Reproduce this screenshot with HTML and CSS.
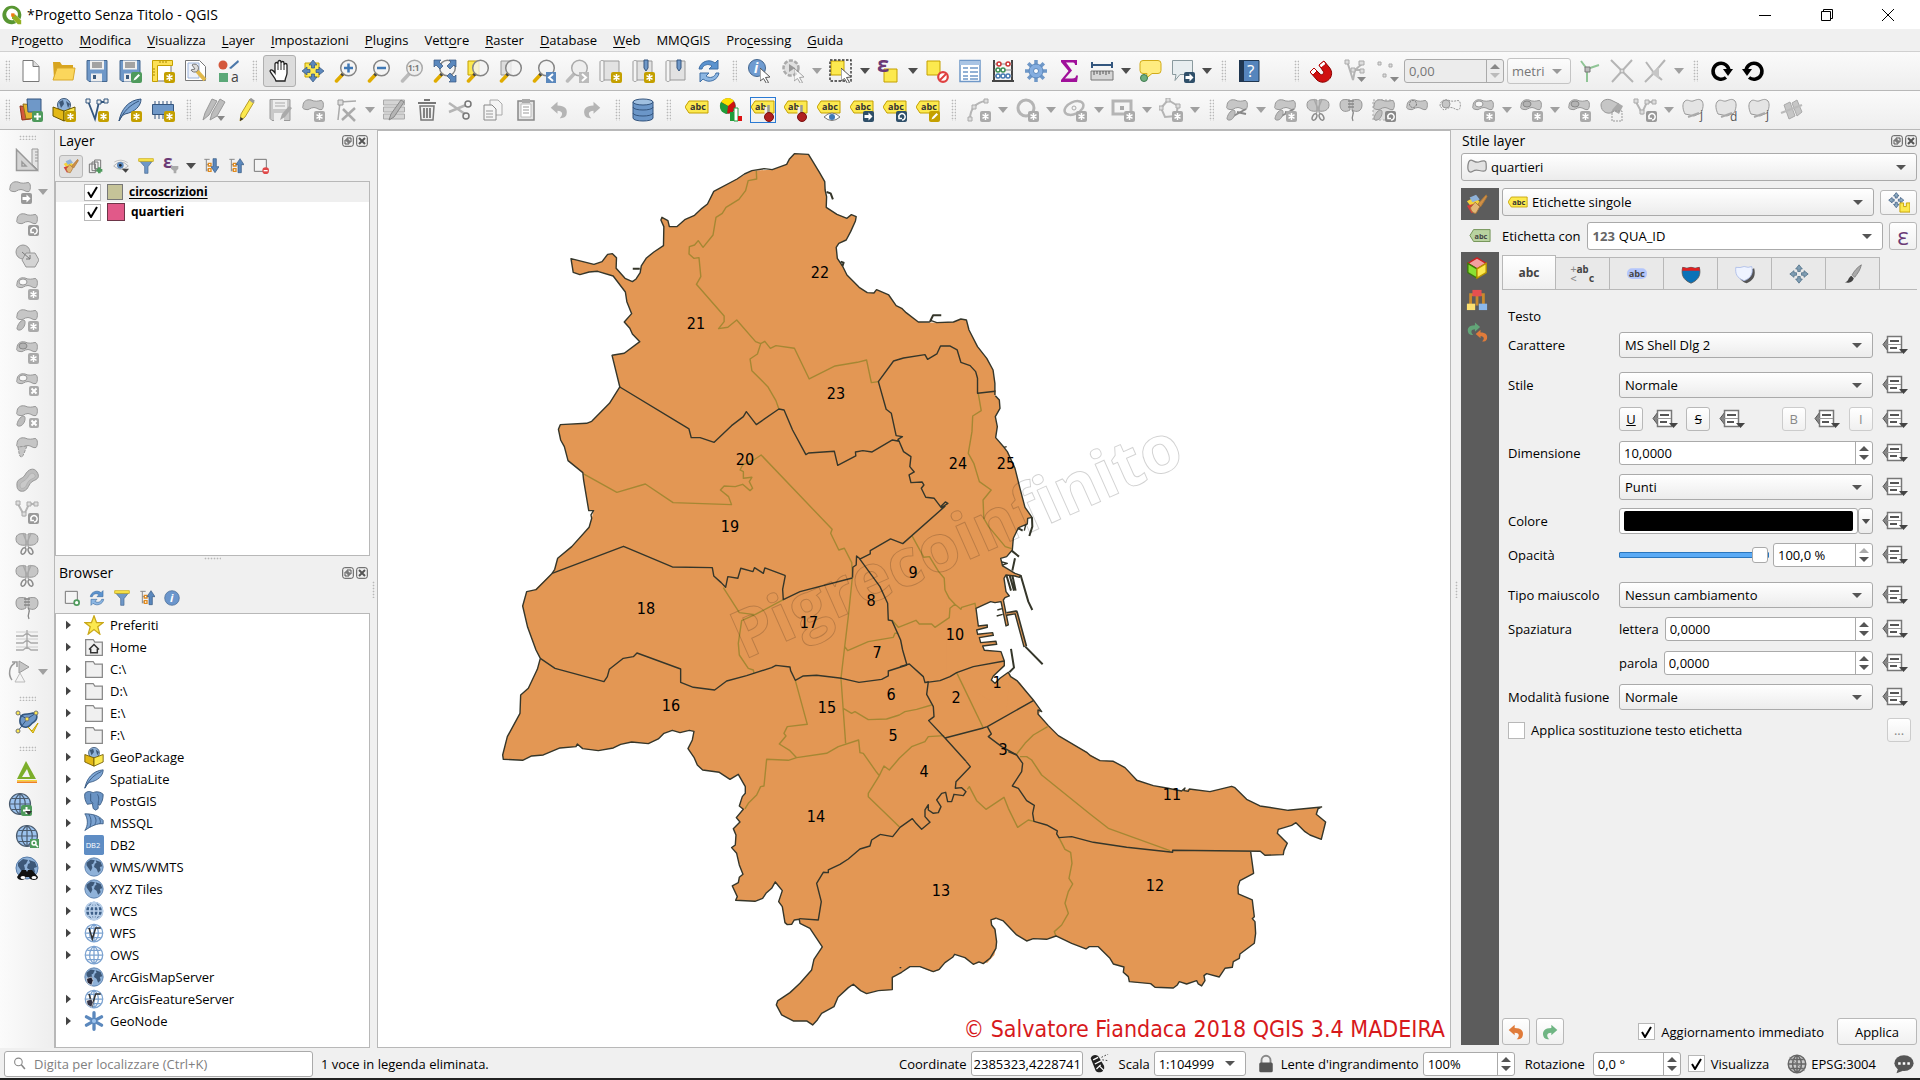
FILE: index.html
```html
<!DOCTYPE html>
<html lang="it">
<head>
<meta charset="utf-8">
<title>*Progetto Senza Titolo - QGIS</title>
<link rel="stylesheet" href="styles.css">
</head>
<body>
<svg class="defs" aria-hidden="true">
<defs>
  <!-- corner badges -->
  <symbol id="b-star" viewBox="0 0 24 24"><rect x="13" y="13" width="11" height="11" rx="2"/><path d="M18.500 15v7M15.500 16.700l6 3.600M15.500 20.300l6-3.600" stroke="#fff" stroke-width="1.500"/></symbol>
  <symbol id="b-plus" viewBox="0 0 24 24"><rect x="13" y="13" width="11" height="11" rx="2"/><path d="M18.500 15v7M15 18.500h7" stroke="#fff" stroke-width="2"/></symbol>
  <symbol id="b-x" viewBox="0 0 24 24"><rect x="14" y="14" width="10" height="10" rx="2"/><path d="M16.500 16.500l5 5M21.500 16.500l-5 5" stroke="#fff" stroke-width="2"/></symbol>
  <symbol id="b-arrow" viewBox="0 0 24 24"><rect x="13" y="13" width="11" height="11" rx="2"/><path d="M14.500 17h4v-2.500l4 4-4 4V20h-4z" fill="#fff"/></symbol>
  <symbol id="b-rot" viewBox="0 0 24 24"><rect x="13" y="13" width="11" height="11" rx="2"/><path d="M16 20a3.200 3.200 0 1 1 3 2M16 17v3.500h3" fill="none" stroke="#fff" stroke-width="1.500"/></symbol>
  <symbol id="b-pen" viewBox="0 0 24 24"><rect x="13" y="13" width="11" height="11" rx="2"/><path d="M15.500 21.500l1-2.500 4-4 1.500 1.500-4 4z" fill="#fff"/></symbol>
  <symbol id="b-left" viewBox="0 0 24 24"><rect x="14" y="13" width="10" height="11"/><path d="M21 15l-4 3.500 4 3.500" fill="none" stroke="#fff" stroke-width="2"/></symbol>
  <symbol id="b-right" viewBox="0 0 24 24"><rect x="14" y="13" width="10" height="11"/><path d="M17 15l4 3.500-4 3.500" fill="none" stroke="#fff" stroke-width="2"/></symbol>
  <!-- shared shapes -->
  <symbol id="down" viewBox="0 0 10 6"><path d="M0 0h10L5 6z" fill="#4d4d4d"/></symbol>
  <symbol id="downg" viewBox="0 0 10 6"><path d="M0 0h10L5 6z" fill="#a0a0a0"/></symbol>
  <symbol id="blob" viewBox="0 0 24 24"><path d="M2 8c0-5 4-7 8-6 4 2 7 1 10 .500 3 0 3 7 1 9-3 1-5-2-8-2-4 0-5 3-8 2C2 11 1 10 2 8z" fill="#c6c6c6" stroke="#979797"/></symbol>
  <symbol id="part" viewBox="0 0 24 24"><path d="M9 12c2 1 1 6-1 8-1 2-5 3-6 1 0-3 3-9 7-9z" fill="#bdbdbd" stroke="#979797"/></symbol>
  <symbol id="lens" viewBox="0 0 24 24"><path d="M9 15l-6.500 7" stroke="#e0ac00" stroke-width="3.500" stroke-linecap="round"/><path d="M9.500 14.500l-2 2" stroke="#444" stroke-width="3"/><circle cx="14.500" cy="9" r="7.800" fill="#f4f4f4" fill-opacity=".8" stroke="#858585" stroke-width="1.500"/></symbol>
  <symbol id="lensg" viewBox="0 0 24 24"><path d="M9 15l-6.500 7" stroke="#bbb" stroke-width="3.500" stroke-linecap="round"/><circle cx="14.500" cy="9" r="7.800" fill="#eee" stroke="#aaa" stroke-width="1.500"/></symbol>
  <symbol id="tag" viewBox="0 0 24 24"><path d="M4 3h19v12H4L0 9z" fill="#fce94f" stroke="#c4a000"/><text x="5" y="12" font-size="9" font-weight="700" fill="#333">abc</text></symbol>
  <symbol id="tagmid" viewBox="0 -3 24 24"><use href="#tag" width="24" height="24"/></symbol>
  <symbol id="globe" viewBox="0 0 24 24"><circle cx="12" cy="12" r="11" fill="#8fb2d9" stroke="#567ba8"/><path d="M3 7l5-4 5 1-2 4-2 1 1 4-2 4-3-4-2-3zM14 4l6 2 2 5-3 1 1 4-3 3-2-5-3-2 1-4 2-1z" fill="#3d5878"/></symbol>
  <symbol id="grid" viewBox="0 0 24 24"><circle cx="12" cy="12" r="10.500"/><path d="M12 1.500v21M2 12h20M4 6.500h16M4 17.500h16M12 1.500c-7 5-7 16 0 21M12 1.500c7 5 7 16 0 21" fill="none"/></symbol>
  <symbol id="cursor" viewBox="0 0 24 24"><path d="M0 0l10 9-4.500.500 3 5-2 1-3-5L0 13z" fill="#fff" stroke="#555"/></symbol>
  <symbol id="disk" viewBox="0 0 24 24"><path d="M2 1.500h20v21H4l-2-2z" fill="#6f98c8" stroke="#44678f"/><path d="M5 1.500h14v9H5z" fill="#f0f0f0"/><path d="M7 4h10M7 6h10M7 8h10" stroke="#555"/><path d="M6 14.500h11v8H6z" fill="#eee"/><path d="M8 16h3v4H8z" fill="#3c5a7c"/></symbol>
  <symbol id="book" viewBox="0 0 24 24"><path d="M5 2h16v19H6" fill="#e2e2e2" stroke="#999"/><path d="M2 3c0-2 4-2 4 0v18c0 2-4 2-4 0z" fill="#f4f4f4" stroke="#999"/></symbol>
  <symbol id="refresh" viewBox="0 0 24 24"><path d="M2 10C3 3 12-1 18 4l3-3v9h-9l3-3C11 4 6 6 5 10z" fill="#5b93cf" stroke="#3f6fa5"/><path d="M22 14c-1 7-10 11-16 6l-3 3v-9h9l-3 3c4 3 9 1 10-3z" fill="#8db7e3" stroke="#3f6fa5"/></symbol>
  <symbol id="scis" viewBox="0 0 24 24"><path d="M8 1l6 15M16 1l-6 15" stroke="#a8a8a8" stroke-width="1.500"/><ellipse cx="8.500" cy="19" rx="2" ry="3.500" transform="rotate(25 8.500 19)" fill="none" stroke="#8c8c8c" stroke-width="1.500"/><ellipse cx="15.500" cy="19" rx="2" ry="3.500" transform="rotate(-25 15.500 19)" fill="none" stroke="#8c8c8c" stroke-width="1.500"/></symbol>
  <symbol id="moves" viewBox="0 0 24 24"><path d="M12 1l4 5h-2.500v3h-3V6H8zM12 23l-4-5h2.500v-3h3v3H16zM1 12l5-4v2.500h3v3H6V16zM23 12l-5 4v-2.500h-3v-3h3V8z"/></symbol>
  <!-- file -->
  <symbol id="new" viewBox="0 0 24 24"><path d="M4 1.500h10l6 6v15H4z" fill="#fff" stroke="#777"/><path d="M14 1.500v6h6" fill="#ddd" stroke="#777"/></symbol>
  <symbol id="open" viewBox="0 0 24 24"><path d="M1 3h7l2 3h11v14H2z" fill="#d8a520"/><path d="M5 9h18l-2 12H1z" fill="#fbd65c" stroke="#d9a92a"/></symbol>
  <symbol id="saveas" viewBox="0 0 24 24"><use href="#disk"/><use href="#b-pen" fill="#4e9a5c"/></symbol>
  <symbol id="layout" viewBox="0 0 24 24"><path d="M3 3h17v19H3z" fill="#fff" stroke="#777"/><path d="M1.500 1.500h20v5h-15v16h-5z" fill="#fce055" stroke="#c4a000"/><path d="M9 2v2M12 2v2M15 2v2M2 10h2M2 13h2M2 16h2" stroke="#a98700"/><use href="#b-star" fill="#c4a000"/></symbol>
  <symbol id="manager" viewBox="0 0 24 24"><path d="M1.500 1.500h14l6 6v14h-20z" fill="#fff" stroke="#777"/><path d="M4 4h11v15H4z" fill="#eef2fa" stroke="#9cb4dc"/><path d="M13 12l8 9" stroke="#e0b84a" stroke-width="4"/><path d="M8 6a4 4 0 1 1-1 5l4-1z" fill="#ddd" stroke="#777"/></symbol>
  <symbol id="styles" viewBox="0 0 24 24"><circle cx="6" cy="6" r="4.500" fill="#d4583c"/><path d="M12 9l9-8 1 2-8 7z" fill="#4c78aa"/><path d="M2 14h9v9H2z" fill="#5ba878"/><text x="14" y="23" font-size="14" fill="#444">a</text></symbol>
  <!-- navigation -->
  <symbol id="hand" viewBox="0 0 24 24"><path d="M8 22c-1-4-5-7-6-10 1-2 3-1 5 2V5c0-2 3-2 3 0V3c0-2 3-2 3 0v1c0-2 3-2 3 0v2c0-2 3-2 3 0v8c0 3-2 5-2 8z" fill="#fff" stroke="#222" stroke-width="1.300"/><path d="M10 5v6M13 4v7M16 6v5" stroke="#222"/></symbol>
  <symbol id="panto" viewBox="0 0 24 24"><path d="M4 4h14v14H4z" fill="#fce94f" stroke="#c4a000"/><use href="#moves" fill="#5b88bd" stroke="#34557e" stroke-width=".7"/></symbol>
  <symbol id="zin" viewBox="0 0 24 24"><use href="#lens"/><path d="M14.500 4.500v9M10 9h9" stroke="#3f78b5" stroke-width="2.500"/></symbol>
  <symbol id="zout" viewBox="0 0 24 24"><use href="#lens"/><path d="M10 9h9" stroke="#3f78b5" stroke-width="2.500"/></symbol>
  <symbol id="z11" viewBox="0 0 24 24"><use href="#lensg"/><text x="8" y="12" font-size="8" font-weight="700" fill="#777">1:1</text></symbol>
  <symbol id="zfull" viewBox="0 0 24 24"><use href="#lens"/><path d="M1 1h7L6 3l4 4-3 3-4-4-2 2zM23 1v7l-2-2-4 4-3-3 4-4-2-2zM23 23h-7l2-2-4-4 3-3 4 4 2-2z" fill="#5b88bd" stroke="#34557e" stroke-width=".7"/></symbol>
  <symbol id="zsel" viewBox="0 0 24 24"><path d="M2 2h11v14H2z" fill="#fce94f" stroke="#c4a000"/><use href="#lens"/></symbol>
  <symbol id="zlay" viewBox="0 0 24 24"><path d="M2 2h10v14H2z" fill="#ddd" stroke="#999"/><use href="#lens"/></symbol>
  <symbol id="zlast" viewBox="0 0 24 24"><use href="#lens"/><use href="#b-left" fill="#5b88bd"/></symbol>
  <symbol id="znext" viewBox="0 0 24 24"><use href="#lensg"/><use href="#b-right" fill="#bbb"/></symbol>
  <symbol id="mapview" viewBox="0 0 24 24"><use href="#book"/><use href="#b-star" fill="#c4a000"/></symbol>
  <symbol id="bmk" viewBox="0 0 24 24"><use href="#book"/><path d="M13 1h4v8l-2 3-2-3z" fill="#6f98c8" stroke="#34557e"/></symbol>
  <symbol id="bmknew" viewBox="0 0 24 24"><use href="#bmk"/><use href="#b-star" fill="#c4a000"/></symbol>
  <!-- attributes -->
  <symbol id="ident" viewBox="0 0 24 24"><circle cx="9" cy="9" r="8.500" fill="#6f9bd0" stroke="#44678f"/><text x="6" y="14" font-size="14" font-style="italic" font-weight="700" fill="#fff">i</text><use href="#cursor" x="12" y="9"/></symbol>
  <symbol id="action" viewBox="0 0 24 24"><circle cx="10" cy="9" r="7.500" fill="#e0e0e0" stroke="#aaa" stroke-width="2.500" stroke-dasharray="4 1.500"/><path d="M8 5l6 4-6 4z" fill="#999"/><use href="#cursor" x="13" y="9" opacity=".5"/></symbol>
  <symbol id="select" viewBox="0 0 24 24"><path d="M2 2h13v14H2z" fill="#fce94f" stroke="#c4a000"/><path d="M1 1h21v21H1z" fill="none" stroke="#333" stroke-width="1.400" stroke-dasharray="2.500 1.500"/><use href="#cursor" x="12" y="9"/></symbol>
  <symbol id="selexp" viewBox="0 0 24 24"><path d="M7 10h13v13H7z" fill="#fce94f" stroke="#c4a000"/><text x="0" y="13" font-size="22" font-weight="700" fill="#6b3a76">ε</text></symbol>
  <symbol id="desel" viewBox="0 0 24 24"><path d="M2 2h13v14H2z" fill="#fce94f" stroke="#c4a000"/><circle cx="18" cy="18" r="4.800" fill="#fff" stroke="#df4040" stroke-width="2.200"/><path d="M15 21l6-6" stroke="#df4040" stroke-width="2"/></symbol>
  <symbol id="table" viewBox="0 0 24 24"><path d="M2 1.500h20v21H2z" fill="#fff" stroke="#6f98c8" stroke-width="1.500"/><path d="M2 2h20v4H2z" fill="#a9c4e4"/><path d="M5 9h5M12 9h8M5 13h5M12 13h8M5 17h5M12 17h8M5 20h5M12 20h8" stroke="#6f98c8" stroke-width="1.500"/></symbol>
  <symbol id="abacus" viewBox="0 0 24 24"><path d="M3 1v21M21 1v21M1 22h22" stroke="#444" stroke-width="2"/><path d="M3 5h18M3 11h18M3 17h18" stroke="#888"/><g fill="#fff" stroke-width="1.500"><g stroke="#c33"><circle cx="8" cy="5" r="2"/><circle cx="17" cy="5" r="2"/></g><g stroke="#3a8d52"><circle cx="7" cy="11" r="2"/><circle cx="12" cy="11" r="2"/></g><g stroke="#4679b3"><circle cx="7" cy="17" r="2"/><circle cx="12" cy="17" r="2"/><circle cx="17" cy="17" r="2"/></g></g></symbol>
  <symbol id="gear" viewBox="0 0 24 24"><path d="M12 1v22M1 12h22M4.200 4.200l15.600 15.600M19.800 4.200L4.200 19.800" stroke="#6f98c8" stroke-width="3.500"/><circle cx="12" cy="12" r="7" fill="#85aee0" stroke="#5b88bd"/><circle cx="12" cy="12" r="2.500" fill="#fff" stroke="#5b88bd"/></symbol>
  <symbol id="sum" viewBox="0 0 24 24"><path d="M4 1h16v5h-2c0-2-1-2.500-3-2.500H9l6 8-7 8h7c3 0 4-1 4-3h2l-1 6.500H4v-2l7.500-9L4 3z" fill="#a0109a"/></symbol>
  <symbol id="measure" viewBox="0 0 24 24"><path d="M2 3v6M22 3v6M2 6h20" stroke="#33567e" stroke-width="2"/><path d="M1 12h22v9H1z" fill="#d6d6d6" stroke="#777"/><path d="M4 12v4M7 12v3M10 12v4M13 12v3M16 12v4M19 12v3" stroke="#555"/></symbol>
  <symbol id="tip" viewBox="0 0 24 24"><path d="M5 1.500h15q3 0 3 3v7q0 3-3 3h-6l-6 5 1-5H5q-3 0-3-3v-7q0-3 3-3z" fill="#ffec80" stroke="#d1ab1a"/><circle cx="6" cy="19" r="3.500" fill="#6fae7f" stroke="#3d7a4e"/></symbol>
  <symbol id="annot" viewBox="0 0 24 24"><path d="M1.500 1.500h20v14H9l-5 6 1-6H1.500z" fill="#e8eef0" stroke="#8a9a9e"/><use href="#b-arrow" fill="#2f4f69"/></symbol>
  <symbol id="help" viewBox="0 0 24 24"><path d="M3 1.500h19v21H3z" fill="#5585bd" stroke="#1f3650"/><path d="M2 1h5v22H2z" fill="#1f3650"/><text x="10" y="18" font-size="17" fill="#fff">?</text></symbol>
  <symbol id="magnet" viewBox="0 0 24 24"><path d="M4 9l6 6c2 2 5-1 3-3L9 6l5-4 5 6c8 9-4 20-12 13L0 13z" fill="#d01010" stroke="#8a0000"/><path d="M0 13l4-4 3 3-4 4zM9 6l5-4 2 3-5 4z" fill="#fff" stroke="#b00"/></symbol>
  <symbol id="vset" viewBox="0 0 24 24"><path d="M4 2l6 19 2-10 8-7M12 11h8" fill="none" stroke="#b5b5b5" stroke-width="2"/><path d="M2 1h4v4H2zM8 9h4v4H8zM16 2h5v4h-5zM17 10h4v4h-4z" fill="#ddd" stroke="#aaa"/><path d="M14 18h9l-4.500 5z" fill="#888"/></symbol>
  <symbol id="pts" viewBox="0 0 24 24"><path d="M2 3h3v3H2zM13 5h3v3h-3zM7 15h3v3H7z" fill="#ddd" stroke="#aaa"/><path d="M14 18h9l-4.500 5z" fill="#888"/></symbol>
  <symbol id="topo" viewBox="0 0 24 24"><path d="M4 2l6 8 12-4M10 10v13" fill="none" stroke="#90c596" stroke-width="2"/><path d="M8 8h5v5H8z" fill="#bbb" stroke="#777"/></symbol>
  <symbol id="cross" viewBox="0 0 24 24"><path d="M1 1l22 22M22 1L2 23" stroke="#b5b5b5" stroke-width="2"/><circle cx="12" cy="12" r="2" fill="#ddd" stroke="#aaa"/></symbol>
  <symbol id="self" viewBox="0 0 24 24"><path d="M3 3l8 11L22 1M2 23l9-9 8 7" fill="none" stroke="#b5b5b5" stroke-width="2"/><path d="M8 14l8-6v12z" fill="#c6c6c6"/></symbol>
  <symbol id="cw" viewBox="0 0 24 24"><path d="M17 18.500A8 8 0 1 1 20 12" fill="none" stroke="#000" stroke-width="3.500"/><path d="M14 10h10l-5 7z"/></symbol>
  <symbol id="ccw" viewBox="0 0 24 24"><path d="M7 18.500a8 8 0 1 0-3-6.500" fill="none" stroke="#000" stroke-width="3.500"/><path d="M0 10h10l-5 7z"/></symbol>
  <!-- data sources and editing -->
  <symbol id="dsm" viewBox="0 0 24 24"><path d="M1 8l12 1-1 12-9 1z" fill="#d4583c" stroke="#8d3018"/><path d="M4 6l13 1-2 13-8 1z" fill="#e3b32e" stroke="#93701a"/><path d="M8 1h14v13H9z" fill="#6f98c8" stroke="#34557e"/><use href="#b-plus" fill="#4e9a5c"/></symbol>
  <symbol id="gpkg" viewBox="0 0 24 24"><circle cx="12" cy="7" r="6.500" fill="#8fb2d9" stroke="#3d5878"/><path d="M7 4l4-2 1 4-3 4zM14 3l4 3-2 4z" fill="#3d5878"/><path d="M1 9l11 4v10L1 18z" fill="#e3b815" stroke="#6b5600"/><path d="M23 9l-11 4v10l11-5z" fill="#fce94f" stroke="#6b5600"/></symbol>
  <symbol id="gpkgnew" viewBox="0 0 24 24"><use href="#gpkg"/><use href="#b-star" fill="#c4a000"/></symbol>
  <symbol id="vnew" viewBox="0 0 24 24"><path d="M3 3l7 18 4-17h7" fill="none" stroke="#33567e" stroke-width="1.800"/><path d="M1 1h4v4H1zM12 2h4v4h-4zM19 1h4v4h-4z" fill="#eee" stroke="#33567e"/><use href="#b-star" fill="#c4a000"/></symbol>
  <symbol id="feather" viewBox="0 0 24 24"><path d="M1 23C3 12 10 2 23 1c0 7-6 13-16 15-3 1-4 4-6 7z" fill="#7ea6d4" stroke="#34557e"/><path d="M1 23C6 13 12 7 21 3" fill="none" stroke="#34557e"/></symbol>
  <symbol id="spnew" viewBox="0 0 24 24"><use href="#feather"/><use href="#b-star" fill="#c4a000"/></symbol>
  <symbol id="mem" viewBox="0 0 24 24"><path d="M4 3v18M8 3v18M12 3v18M16 3v18M20 3v18" stroke="#34557e"/><path d="M1.500 6.500h21v10h-21z" fill="#6f98c8" stroke="#34557e"/><use href="#b-star" fill="#c4a000"/></symbol>
  <symbol id="pens" viewBox="0 0 24 24"><path d="M1 22l2-7L10 1l5 2-8 14zM8 22l2-7 8-14 5 3-8 14z" fill="#bdbdbd" stroke="#999"/><path d="M15 18h8l-4 5z" fill="#888"/></symbol>
  <symbol id="pencil" viewBox="0 0 24 24"><path d="M5 23l1-7L15 1l4 3-9 15z" fill="#fce94f" stroke="#b79c2a"/><path d="M5 23l.500-4 3 2z" fill="#333"/><path d="M15 1l4 3" stroke="#999" stroke-width="3"/></symbol>
  <symbol id="diskg" viewBox="0 0 24 24"><path d="M2 1.500h20v21H4l-2-2z" fill="#c9c9c9" stroke="#9a9a9a"/><path d="M5 2h14v9H5zM6 15h10v8H6z" fill="#eee"/><path d="M7 5h10M7 8h10" stroke="#aaa"/><path d="M12 22l2-6 7-8 3 2-7 9z" fill="#aaa"/></symbol>
  <symbol id="blobs" viewBox="0 0 24 24"><use href="#blob"/><use href="#b-star" fill="#aaa"/></symbol>
  <symbol id="vtool" viewBox="0 0 24 24"><path d="M4 22L6 4l16-1" fill="none" stroke="#aaa" stroke-width="1.500"/><path d="M4 2h5v5H4z" fill="#ddd" stroke="#999"/><path d="M9 11l12 12M21 10L8 22" stroke="#aaa" stroke-width="2.500"/></symbol>
  <symbol id="tedit" viewBox="0 0 24 24"><path d="M1.500 2h21v5h-21zM1.500 9h21v5h-21zM1.500 16h21v5h-21z" fill="#d4d4d4" stroke="#aaa"/><path d="M7 22l2-6L19 2l3 2-10 15z" fill="#b5b5b5" stroke="#888"/></symbol>
  <symbol id="trash" viewBox="0 0 24 24"><path d="M5 8h14l-1 14H6z" fill="#eee" stroke="#777" stroke-width="1.500"/><path d="M3 5h18M9 2h6M9 10v10M12 10v10M15 10v10" stroke="#777" stroke-width="1.800"/></symbol>
  <symbol id="cut" viewBox="0 0 24 24"><path d="M1 5l16 11M1 14l17-7" stroke="#b5b5b5" stroke-width="2.500"/><circle cx="20" cy="6" r="3" fill="none" stroke="#777" stroke-width="1.500"/><circle cx="18" cy="18" r="3" fill="none" stroke="#777" stroke-width="1.500"/></symbol>
  <symbol id="copy" viewBox="0 0 24 24"><path d="M9 2h8l4 4v11H9z" fill="#f5f5f5" stroke="#aaa"/><path d="M3 7h8l4 4v11H3z" fill="#f5f5f5" stroke="#888"/><path d="M5 13h7M5 16h7M5 19h7" stroke="#999"/></symbol>
  <symbol id="paste" viewBox="0 0 24 24"><path d="M4 3h16v19H4z" fill="#e4e4e4" stroke="#888" stroke-width="1.500"/><path d="M7 6h10v13H7z" fill="#fff" stroke="#bbb"/><path d="M8 1h8v4H8z" fill="#aaa"/><path d="M9 9h6M9 12h6M9 15h6" stroke="#999"/></symbol>
  <symbol id="undo" viewBox="0 0 24 24"><path d="M1 9l9-8v5c10 0 14 5 12 12-1 4-5 5-9 5 5-5 4-10-3-10v4z"/></symbol>
  <symbol id="redo" viewBox="0 0 24 24"><path d="M23 9l-9-8v5C4 6 0 11 2 18c1 4 5 5 9 5-5-5-4-10 3-10v4z"/></symbol>
  <symbol id="db" viewBox="0 0 24 24"><path d="M2 4v16c0 4 20 4 20 0V4z" fill="#6b96c8" stroke="#34557e"/><ellipse cx="12" cy="4" rx="10" ry="3" fill="#9fbfe0" stroke="#34557e"/><path d="M2 9c0 4 20 4 20 0M2 15c0 4 20 4 20 0" fill="none" stroke="#34557e"/></symbol>
  <symbol id="diag" viewBox="0 0 24 24"><circle cx="10" cy="8" r="7.500" fill="#cc1111" stroke="#333" stroke-width=".5"/><path d="M10 8L3 4a8 8 0 0 1 13-1z" fill="#fce000"/><path d="M10 8l-1 8A8 8 0 0 1 3 4z" fill="#1f9d3a"/><path d="M12 14h4v9h-4z" fill="#1f9d3a"/><path d="M16 10h4v13h-4z" fill="#fff" stroke="#1f9d3a"/><path d="M20 18h4v5h-4z" fill="#d11"/></symbol>
  <symbol id="pin" viewBox="0 0 24 24"><path d="M15 9v7" stroke="#eee" stroke-width="3"/><path d="M17.500 7v9" stroke="#999" stroke-width="2.500"/><circle cx="18" cy="19" r="4.500" fill="#b02020" stroke="#7a1010"/></symbol>
  <symbol id="lpin" viewBox="0 0 24 24"><path d="M4 3h19v12H4L0 9z" fill="#fce94f" stroke="#c4a000"/><text x="4" y="12" font-size="9" font-weight="700" fill="#333">ab</text><use href="#pin"/></symbol>
  <symbol id="leye" viewBox="0 0 24 24"><use href="#tag"/><path d="M7 19q8-8 16 0-8 7-16 0z" fill="#fff" stroke="#777"/><circle cx="15" cy="19" r="3" fill="#3f78b5"/></symbol>
  <symbol id="lmove" viewBox="0 0 24 24"><use href="#tag"/><use href="#b-arrow" fill="#2f4f69"/></symbol>
  <symbol id="lrot" viewBox="0 0 24 24"><use href="#tag"/><use href="#b-rot" fill="#2f4f69"/></symbol>
  <symbol id="lpen" viewBox="0 0 24 24"><use href="#tag"/><use href="#b-pen" fill="#c4a000"/></symbol>
  <symbol id="arc" viewBox="0 0 24 24"><path d="M3 21C3 11 9 4 19 3" fill="none" stroke="#b5b5b5" stroke-width="2"/><path d="M1 19h4v4H1zM5 7h4v4H5zM17 1h4v4h-4z" fill="#ddd" stroke="#aaa"/><use href="#b-star" fill="#aaa"/></symbol>
  <symbol id="circ" viewBox="0 0 24 24"><circle cx="11" cy="10" r="8" fill="none" stroke="#b5b5b5" stroke-width="3"/><use href="#b-star" fill="#aaa"/></symbol>
  <symbol id="elli" viewBox="0 0 24 24"><ellipse cx="11" cy="10" rx="10" ry="6" transform="rotate(-25 11 10)" fill="none" stroke="#b5b5b5" stroke-width="2.500"/><circle cx="11" cy="10" r="2" fill="none" stroke="#aaa"/><use href="#b-star" fill="#aaa"/></symbol>
  <symbol id="rect" viewBox="0 0 24 24"><path d="M2 3h18v13H2z" fill="none" stroke="#b5b5b5" stroke-width="3"/><path d="M9 8h4v4H9z" fill="#aaa"/><use href="#b-star" fill="#aaa"/></symbol>
  <symbol id="poly" viewBox="0 0 24 24"><path d="M9 2l10 6-2 10-11 1-4-9z" fill="none" stroke="#b5b5b5" stroke-width="2"/><path d="M7 0h4v4H7zM0 8h4v4H0zM17 6h4v4h-4z" fill="#ddd" stroke="#aaa"/><use href="#b-star" fill="#aaa"/></symbol>
  <!-- advanced digitizing -->
  <symbol id="a1" viewBox="0 0 24 24"><use href="#blob"/><path d="M3 21L21 11M12 14l9 2" stroke="#888" stroke-width="2"/><use href="#part"/></symbol>
  <symbol id="a2" viewBox="0 0 24 24"><use href="#a1"/><use href="#b-star" fill="#aaa"/></symbol>
  <symbol id="split" viewBox="0 0 24 24"><path d="M11 2v11C6 14 1 12 1 7s4-6 10-5zM13 2v11c5 1 10-1 10-6s-4-6-10-5z" fill="#c6c6c6" stroke="#979797"/><use href="#scis"/></symbol>
  <symbol id="merge" viewBox="0 0 24 24"><path d="M11 2v10C6 15 1 13 1 7s4-6 10-5zM13 2v10c5 3 10 1 10-5s-4-6-10-5z" fill="#c6c6c6" stroke="#979797"/><path d="M9 3h6M9 6h6M9 9h6M13 12c4 4-2 5 1 11" fill="none" stroke="#888" stroke-width="1.300"/></symbol>
  <symbol id="mset" viewBox="0 0 24 24"><path d="M1 2h20v20H1z" fill="#ddd" stroke="#aaa" stroke-dasharray="2"/><use href="#blob"/><use href="#part"/><use href="#b-rot" fill="#888"/></symbol>
  <symbol id="blobd" viewBox="0 0 24 24"><use href="#blob"/><circle cx="8" cy="6" r="3.500" fill="none" stroke="#777" stroke-dasharray="2 1"/></symbol>
  <symbol id="blobh" viewBox="0 0 24 24"><path d="M2 8c0-5 4-7 8-6 4 2 7 1 10 .500 3 0 3 7 1 9-3 1-5-2-8-2-4 0-5 3-8 2z" fill="#f4f4f4" stroke="#999" stroke-dasharray="2 1"/><circle cx="8" cy="6" r="4" fill="#c6c6c6" stroke="#999"/></symbol>
  <symbol id="ring" viewBox="0 0 24 24"><use href="#blob"/><ellipse cx="8" cy="6" rx="4" ry="3" fill="#f8f8f8" stroke="#979797"/></symbol>
  <symbol id="ringadd" viewBox="0 0 24 24"><use href="#ring"/><use href="#b-star" fill="#aaa"/></symbol>
  <symbol id="ringdel" viewBox="0 0 24 24"><use href="#ring"/><use href="#b-x" fill="#aaa"/></symbol>
  <symbol id="ringfill" viewBox="0 0 24 24"><use href="#blob"/><ellipse cx="8" cy="6" rx="4" ry="3" fill="#b3b3b3" stroke="#888"/><use href="#b-star" fill="#aaa"/></symbol>
  <symbol id="partadd" viewBox="0 0 24 24"><use href="#blob"/><use href="#part"/><use href="#b-star" fill="#aaa"/></symbol>
  <symbol id="partdel" viewBox="0 0 24 24"><use href="#blob"/><use href="#part"/><use href="#b-x" fill="#aaa"/></symbol>
  <symbol id="clip" viewBox="0 0 24 24"><path d="M1 7c0-4 5-7 10-5l8 4-6 8c-5 3-12 0-12-7z" fill="#c6c6c6" stroke="#979797"/><path d="M12 12l6-7 5 3-4 8z" fill="#aaa"/><path d="M12 13h10v10H12z" fill="none" stroke="#999" stroke-dasharray="2 1"/></symbol>
  <symbol id="vrot" viewBox="0 0 24 24"><path d="M3 4l6 11 5-11h8" fill="none" stroke="#b5b5b5" stroke-width="2"/><path d="M1 1h4v4H1zM12 2h4v4h-4zM19 2h4v4h-4zM7 12h4v4H7z" fill="#ddd" stroke="#aaa"/><use href="#b-rot" fill="#999"/></symbol>
  <symbol id="tooth" viewBox="0 0 24 24"><path d="M3 4c3-4 6 0 9-1s6-3 9 0c2 3 1 8-1 12l-7 3-4-1-5-1C2 12 1 7 3 4z" fill="#e4e4e4" stroke="#999"/><path d="M7 19l11-4" stroke="#aaa" stroke-width="2"/></symbol>
  <symbol id="toothj" viewBox="0 0 24 24"><use href="#tooth"/><text x="19" y="21" font-size="12" fill="#555">j</text></symbol>
  <symbol id="toothd" viewBox="0 0 24 24"><use href="#tooth"/><text x="16" y="23" font-size="12" fill="#555">d</text></symbol>
  <symbol id="par" viewBox="0 0 24 24"><path d="M4 7l6-3 5 14-6 3zM12 5l5-3 5 12-5 4z" fill="#c6c6c6" stroke="#aaa"/><path d="M1 15L22 7" stroke="#bbb" stroke-width="2"/></symbol>
  <symbol id="square" viewBox="0 0 24 24"><path d="M1.500 1.500l21 21h-21zM7 14v4h4z" fill="#d4d4d4" stroke="#999" fill-rule="evenodd" stroke-width="1.500"/><path d="M17 1h6v21l-6-6z" fill="#e4e4e4" stroke="#999"/><path d="M20 4h3M20 7h3M20 10h3M20 13h3" stroke="#999"/></symbol>
  <symbol id="fmove" viewBox="0 0 24 24"><use href="#blob"/><use href="#b-arrow" fill="#999"/></symbol>
  <symbol id="frot" viewBox="0 0 24 24"><use href="#blob"/><use href="#b-rot" fill="#999"/></symbol>
  <symbol id="simp" viewBox="0 0 24 24"><circle cx="8" cy="8" r="7" fill="#c6c6c6" stroke="#979797"/><path d="M11 9h9l4 7-4 7h-9l-4-7z" fill="#d4d4d4" stroke="#979797"/><path d="M7 8l8 7M15 11v4h-4" fill="none" stroke="#777"/></symbol>
  <symbol id="reshape" viewBox="0 0 24 24"><use href="#blob"/><path d="M3 11c1 5 1 9 3 10s4-7 6-11z" fill="#c6c6c6" stroke="#979797" stroke-dasharray="3 1"/></symbol>
  <symbol id="offset" viewBox="0 0 24 24"><path d="M2 18C1 10 7 12 10 7c3-6 9-8 12-3s1 7-4 9c-5 3-4 8-9 10-4 1-7-1-7-5z" fill="#bdbdbd" stroke="#979797"/><path d="M5 18c0-5 5-4 8-9 2-4 5-5 7-2 1 3-2 3-5 5-4 3-3 7-6 8-2 1-4 0-4-2z" fill="#c9c9c9" stroke="#aaa" stroke-width=".7"/></symbol>
  <symbol id="splitp" viewBox="0 0 24 24"><use href="#split"/></symbol>
  <symbol id="mfeat" viewBox="0 0 24 24"><path d="M1 4h22M1 11h22M1 19h22" stroke="#ccc"/><path d="M1 8h7l4-3 4 3h7M1 15h7l4-3 4 3h7M1 22h7l4-3 4 3h7M12 2v19" fill="none" stroke="#aaa" stroke-width="1.400"/></symbol>
  <symbol id="rotpt" viewBox="0 0 24 24"><path d="M7 3C1 6 0 15 4 20M4 2h5v5" fill="none" stroke="#999" stroke-width="1.500"/><path d="M11 1l10 6-10 6z" fill="#c6c6c6" stroke="#999"/><path d="M12 13l5 9H7z" fill="#f4f4f4" stroke="#bbb"/></symbol>
  <symbol id="vcheck" viewBox="0 0 24 24"><path d="M5 9c1-7 8-4 13-6 5 0 5 6 1 9-4 2-3 4-7 5s-8-2-7-8z" fill="#6f98c8" stroke="#33567e" stroke-width="1.500"/><path d="M2 3l10 6 9-6M12 9L3 21" fill="none" stroke="#33567e"/><g fill="#fce94f" stroke="#777"><circle cx="3" cy="3" r="2"/><circle cx="21" cy="3" r="2"/><circle cx="12" cy="9" r="2"/><circle cx="3" cy="21" r="2"/></g><path d="M13 17l4 4 6-8-5 10z" fill="#fce94f" stroke="#c4a000"/></symbol>
  <symbol id="tri" viewBox="0 0 24 24"><path d="M11 1l10 18H2zM12 9l-5 8h8z" fill="#7cae2a" fill-rule="evenodd"/><path d="M2 20h20v1.500H2z" fill="#f5d33a"/><path d="M2 21.500h20V23H2z" fill="#f08020"/></symbol>
  <symbol id="gadd" viewBox="0 0 24 24"><use href="#grid" fill="#9cc3ee" stroke="#4a5b6e" stroke-width="1.200"/><use href="#b-plus" fill="#4e9a5c"/><path d="M17 19h7l-3 4z" fill="#333"/></symbol>
  <symbol id="gfind" viewBox="0 0 24 24"><use href="#grid" fill="#9cc3ee" stroke="#4a5b6e" stroke-width="1.200"/><rect x="15" y="15" width="9" height="9" fill="#4e9a5c"/><circle cx="19" cy="19" r="2" fill="none" stroke="#fff" stroke-width="1.500"/><path d="M20 20l3 3" stroke="#fff" stroke-width="1.500"/></symbol>
  <symbol id="bino" viewBox="0 0 24 24"><use href="#globe"/><path d="M7 14h4l1 2 1-2h4l6 7c0 4-8 4-9 0h-3c-1 4-8 4-9 0z" fill="#111"/><ellipse cx="8" cy="21.500" rx="2.500" ry="1.500" fill="#fff"/><ellipse cx="19" cy="21.500" rx="2.500" ry="1.500" fill="#fff"/></symbol>
  <!-- docks -->
  <symbol id="brush" viewBox="0 0 24 24"><path d="M1 9l9-5 7 8-9 6z" fill="#f5d33a"/><path d="M4 5l7-3 4 5-8 3z" fill="#8fb2d9"/><path d="M1 14l7-2 5 6-7 4z" fill="#d43c3c"/><path d="M10 10l5 5-4 7c-3 1-6-3-6-6z" fill="#e3b777" stroke="#a8763a"/><path d="M13 12l9-10 1 2-7 11z" fill="#cf8f45" stroke="#a8763a"/></symbol>
  <symbol id="grpadd" viewBox="0 0 24 24"><path d="M2 9h9v13H2zM6 6h9v13H6zM10 3h9v13h-9z" fill="none" stroke="#777" stroke-width="1.500"/><path d="M17 14v9M12.500 18.500h9" stroke="#4e9a5c" stroke-width="4"/></symbol>
  <symbol id="eye" viewBox="0 0 24 24"><path d="M1 12Q12 0 23 12 12 22 1 12z" fill="#eee" stroke="#999"/><path d="M2 6Q12 0 22 7" fill="none" stroke="#aaa"/><circle cx="11" cy="11" r="5" fill="#5b88bd"/><circle cx="11" cy="11" r="2" fill="#222"/><path d="M13 16h11l-5 6z" fill="#444"/></symbol>
  <symbol id="funnel" viewBox="0 0 24 24"><path d="M2 4h20l-7 9v10h-5V13z" fill="#6f98c8" stroke="#44678f"/><path d="M1 1h22v4H1z" fill="#fce94f" stroke="#c4a000"/></symbol>
  <symbol id="efun" viewBox="0 0 24 24"><text x="0" y="15" font-size="26" font-weight="700" fill="#6b3a76">ε</text><path d="M12 12h11v4l-3 3v4h-4v-4l-4-3z" fill="#aaa"/></symbol>
  <symbol id="expand" viewBox="0 0 24 24"><path d="M2 2h8M5 2v18M5 10h5M5 18h5" fill="none" stroke="#888" stroke-width="1.500"/><path d="M8 8h4v4H8zM8 16h4v4H8z" fill="#fff" stroke="#e08a1e" stroke-width="2"/><path d="M15 1h5v12h4l-6 9-6-9h3z" fill="#5b88bd" stroke="#33567e"/></symbol>
  <symbol id="collapse" viewBox="0 0 24 24"><path d="M2 2h8M5 2v18M5 10h5M5 18h5" fill="none" stroke="#888" stroke-width="1.500"/><path d="M8 8h4v4H8zM8 16h4v4H8z" fill="#fff" stroke="#e08a1e" stroke-width="2"/><path d="M15 22h5V10h4l-6-9-6 9h3z" fill="#5b88bd" stroke="#33567e"/></symbol>
  <symbol id="remove" viewBox="0 0 24 24"><path d="M2 2h18v18H2z" fill="#f4f4f4" stroke="#777" stroke-width="1.500"/><circle cx="19" cy="19" r="5" fill="#e04848"/><path d="M16 19h6" stroke="#fff" stroke-width="2"/></symbol>
  <symbol id="add" viewBox="0 0 24 24"><path d="M2 2h18v18H2z" fill="#f4f4f4" stroke="#777" stroke-width="1.500"/><circle cx="19" cy="19" r="3.700" fill="#fff" stroke="#4e9a5c" stroke-width="2.500"/></symbol>
  <symbol id="info" viewBox="0 0 24 24"><circle cx="12" cy="12" r="11" fill="#6b96cc" stroke="#44678f"/><text x="9" y="18" font-size="17" font-style="italic" font-weight="700" fill="#fff">i</text></symbol>
  <symbol id="float" viewBox="0 0 12 12"><rect x=".700" y=".700" width="10.600" height="10.600" rx="2" fill="none" stroke="#555"/><path d="M5 3h4v4H5zM3 5h4v4H3z" fill="#efefef" stroke="#555"/></symbol>
  <symbol id="close" viewBox="0 0 12 12"><rect x=".700" y=".700" width="10.600" height="10.600" rx="2" fill="none" stroke="#555"/><path d="M3 3l6 6M9 3L3 9" stroke="#555" stroke-width="2"/></symbol>
  <!-- browser tree -->
  <symbol id="tarrow" viewBox="0 0 6 10"><path d="M0 0l6 5-6 5z" fill="#444"/></symbol>
  <symbol id="star" viewBox="0 0 24 24"><path d="M12 1l3 8h8l-6.500 5 2.500 9-7-5.500L5 23l2.500-9L1 9h8z" fill="#fce94f" stroke="#c9a81a" stroke-width="1.500"/></symbol>
  <symbol id="folder" viewBox="0 0 24 24"><path d="M2 3h9l2 3h9v16H2z" fill="#f0f0f0" stroke="#888" stroke-width="1.500"/></symbol>
  <symbol id="home" viewBox="0 0 24 24"><use href="#folder"/><path d="M6 15l6-6 6 6M8 14v5h8v-5" fill="none" stroke="#333" stroke-width="1.800"/></symbol>
  <symbol id="pg" viewBox="0 0 24 24"><path d="M1 3c4-4 7-2 10-1 4-2 9-1 12 2 0 5-1 9-4 13l-2-1v5l-3 2-3-2-1-6-6 1C2 13 0 8 1 3z" fill="#6b94c4" stroke="#33567e"/><path d="M8 3v9l3 3M16 4c3 4 1 8 1 12" fill="none" stroke="#33567e"/></symbol>
  <symbol id="ms" viewBox="0 0 24 24"><path d="M1 1c9 0 17 2 22 8v4c-7-1-15 3-22 8 4-6 4-14 0-20z" fill="#7ba2d0" stroke="#33567e"/><path d="M6 2c3 5 3 10 1 15M12 3c3 4 3 7 1 11M18 6c2 3 2 5 1 7" fill="none" stroke="#33567e"/></symbol>
  <symbol id="db2" viewBox="0 0 24 24"><rect width="24" height="24" rx="2" fill="#5f8dc4"/><text x="2" y="15" font-size="9" fill="#fff">DB2</text></symbol>
  <symbol id="wcs" viewBox="0 0 24 24"><circle cx="12" cy="12" r="11" fill="#3d5f88"/><use href="#grid" fill="none" stroke="#b9d0ea" stroke-width="2"/></symbol>
  <symbol id="ows" viewBox="0 0 24 24"><use href="#grid" fill="#fff" stroke="#7ba2d0" stroke-width="1.500"/></symbol>
  <symbol id="wfs" viewBox="0 0 24 24"><use href="#ows"/><path d="M6 6l4 13 4-13h6" fill="none" stroke="#333" stroke-width="1.800"/></symbol>
  <symbol id="ams" viewBox="0 0 24 24"><use href="#globe"/><path d="M3 14l6-2 2 4-2 6-5-3z" fill="#223" stroke="#fff" stroke-width=".7"/></symbol>
  <symbol id="afs" viewBox="0 0 24 24"><use href="#wfs"/><path d="M3 14l6-2 2 4-2 6-5-3z" fill="#334" stroke="#fff" stroke-width=".7"/></symbol>
  <symbol id="node" viewBox="0 0 24 24"><path d="M12 2v20M3 7l18 10M3 17L21 7" stroke="#5b88bd" stroke-width="4" stroke-linecap="round"/><circle cx="12" cy="12" r="2.500" fill="#9cc3ee"/></symbol>
  <!-- style dock -->
  <symbol id="polyl" viewBox="0 0 24 24"><path d="M2 6c3-6 7 2 12 0 6-2 9-2 9 2 0 5 1 9-3 9-6 0-8-3-13 0-6 4-7-4-5-11z" fill="#e2e2e2" stroke="#888" stroke-width="1.500"/></symbol>
  <symbol id="gtag" viewBox="0 0 24 24"><path d="M5 5h18v13H5l-4-6.500z" fill="#b9d3a0" stroke="#6f8f52"/><text x="6" y="15" font-size="8" font-weight="700" fill="#444">abc</text></symbol>
  <symbol id="cube" viewBox="0 0 24 24"><path d="M12 1l10 6-10 6L2 7z" fill="#f3a0a0" stroke="#c22" stroke-width="1.500"/><path d="M2 7l10 6v10L2 17z" fill="#8ae234" stroke="#3b7a0a" stroke-width="1.500"/><path d="M22 7l-10 6v10l10-6z" fill="#fce94f" stroke="#b89500" stroke-width="1.500"/></symbol>
  <symbol id="diagb" viewBox="0 0 24 24"><path d="M5 17V6h14v11M12 6v12" fill="none" stroke="#c98a2c" stroke-width="3"/><path d="M7 1h10v7H7z" fill="#e65050"/><path d="M1 16h9v7H1z" fill="#fce070"/><path d="M14 16h9v7h-9z" fill="#8bb8ea"/></symbol>
  <symbol id="hist" viewBox="0 0 24 24"><use href="#redo" width="15" height="15" x="1" y="1" fill="#62a578"/><use href="#undo" width="14" height="14" x="10" y="9" fill="#e07b3a"/></symbol>
  <symbol id="place" viewBox="0 0 24 24"><use href="#moves" width="18" height="18" x="0" y="1" fill="#8ba9bf" stroke="#34557e"/><path d="M13 13h4v4h3v-4h4v10H13z" fill="#fce94f" stroke="#c4a000"/></symbol>
  <symbol id="halo" viewBox="0 0 24 24"><rect x="0" y="5" width="24" height="13" rx="6" fill="#b4c6fb"/><text x="2" y="15" font-size="11" font-weight="700" fill="#444">abc</text></symbol>
  <symbol id="shield" viewBox="0 0 24 24"><path d="M2 4q5 2 10 0 5 2 10 0c2 8 0 15-10 19C2 19 0 12 2 4z" fill="#0a72b8" stroke="#555"/><path d="M2 4q5 2 10 0 5 2 10 0l.700 4H1.300z" fill="#e02020"/></symbol>
  <symbol id="shadow" viewBox="0 0 24 24"><path d="M4 5q5 2 10 0 5 2 9 0c2 8 0 15-9 18-9-3-11-10-10-18z" fill="#555"/><path d="M1 4q5 1 10-1 5 2 9 0c2 7 0 14-9 17C2 17 0 11 1 4z" fill="#eef3ff" stroke="#a9bbe8"/></symbol>
  <symbol id="pbrush" viewBox="0 0 24 24"><path d="M22 1c-5 3-9 8-11 12l3 3c3-4 7-9 8-15z" fill="#aaa" stroke="#777"/><path d="M10 14l3 3c-2 6-7 6-11 5 5-1 4-6 8-8z" fill="#444"/></symbol>
  <symbol id="ddo" viewBox="0 0 26 20"><path d="M6 3v13L1 9.500z" fill="#888" stroke="#555"/><path d="M5.500 1.500h14v16h-14z" fill="#fff" stroke="#777" stroke-width="1.500"/><path d="M8 6h9M8 13h7" stroke="#555" stroke-width="2"/><path d="M5 9.500h14" stroke="#999"/><path d="M17 14h9l-4.500 5z" fill="#444"/></symbol>
  <!-- status bar -->
  <symbol id="search" viewBox="0 0 24 24"><circle cx="10" cy="9" r="7" fill="none" stroke="#888" stroke-width="2"/><path d="M15 14l7 8" stroke="#888" stroke-width="3"/></symbol>
  <symbol id="mouse" viewBox="0 0 24 24"><path d="M2 5c2-5 8-5 10-1l6 10c2 8-7 10-10 6z" fill="#222"/><path d="M5 7l6-3M7 12l8-4M12 14l6 6M9 18l5-5" stroke="#fff" stroke-width="1.500"/><path d="M15 4l8-4M16 7l7 1" stroke="#222" stroke-dasharray="2"/></symbol>
  <symbol id="lock" viewBox="0 0 24 24"><path d="M6 11V7a6 6 0 0 1 12 0v4" fill="none" stroke="#888" stroke-width="2.500"/><rect x="3" y="10" width="18" height="13" rx="2" fill="#555"/></symbol>
  <symbol id="crs" viewBox="0 0 24 24"><use href="#grid" fill="#ccc" stroke="#666" stroke-width="1.800"/><path d="M3 4l18 16" stroke="#777"/></symbol>
  <symbol id="bubble" viewBox="0 0 24 24"><ellipse cx="12" cy="11" rx="11.500" ry="9.500" fill="#555"/><path d="M5 17l-2 6 8-3z" fill="#555"/><path d="M5 10h3v3H5zM10.500 10h3v3h-3zM16 10h3v3h-3z" fill="#fff"/></symbol>
  <symbol id="logo" viewBox="0 0 24 24"><path d="M12 1a11 11 0 1 0 5 20.500L14 18a7 7 0 1 1 4.500-4l3.500 3A11 11 0 0 0 12 1z" fill="#589632"/><path d="M12 11l4 .500 7 7V23h-4l-7-7z" fill="#93b023"/><path d="M11 10h4v4h-4z" fill="#ee7913"/></symbol>
</defs>
</svg>

<header class="titlebar">
  <svg class="logo"><use href="#logo"/></svg>
  <h1>*Progetto Senza Titolo - QGIS</h1>
  <div class="winbtns">
    <button aria-label="Riduci"><svg viewBox="0 0 12 12"><path d="M0 6.500h12" stroke="#000"/></svg></button>
    <button aria-label="Ripristina"><svg viewBox="0 0 12 12"><path d="M.500 2.500h9v9h-9zM2.500 2.500v-2h9v9h-2" fill="none" stroke="#000"/></svg></button>
    <button aria-label="Chiudi"><svg viewBox="0 0 12 12"><path d="M0 0l12 12M12 0L0 12" stroke="#000"/></svg></button>
  </div>
</header>

<nav class="menubar">
  <a href="#"><span>P<u>r</u>ogetto</span></a><a href="#"><span><u>M</u>odifica</span></a><a href="#"><span><u>V</u>isualizza</span></a><a href="#"><span><u>L</u>ayer</span></a><a href="#"><span><u>I</u>mpostazioni</span></a><a href="#"><span><u>P</u>lugins</span></a><a href="#"><span>Vett<u>o</u>re</span></a><a href="#"><span><u>R</u>aster</span></a><a href="#"><span><u>D</u>atabase</span></a><a href="#"><span><u>W</u>eb</span></a><a href="#"><span>MMQGIS</span></a><a href="#"><span>Pro<u>c</u>essing</span></a><a href="#"><span><u>G</u>uida</span></a>
</nav>

<div class="toolbar">
  <i class="grip first"></i>
  <button class="tb" aria-label="Nuovo"><svg><use href="#new"/></svg></button>
  <button class="tb" aria-label="Apri"><svg><use href="#open"/></svg></button>
  <button class="tb" aria-label="Salva"><svg><use href="#disk"/></svg></button>
  <button class="tb" aria-label="Salva come"><svg><use href="#saveas"/></svg></button>
  <button class="tb" aria-label="Nuovo layout"><svg><use href="#layout"/></svg></button>
  <button class="tb" aria-label="Gestore layout"><svg><use href="#manager"/></svg></button>
  <button class="tb" aria-label="Gestore stili"><svg><use href="#styles"/></svg></button>
  <i class="grip"></i>
  <button class="tb on" aria-label="Sposta mappa"><svg><use href="#hand"/></svg></button>
  <button class="tb" aria-label="Sposta alla selezione"><svg><use href="#panto"/></svg></button>
  <button class="tb" aria-label="Ingrandisci"><svg><use href="#zin"/></svg></button>
  <button class="tb" aria-label="Rimpicciolisci"><svg><use href="#zout"/></svg></button>
  <button class="tb" aria-label="Zoom nativo"><svg><use href="#z11"/></svg></button>
  <button class="tb" aria-label="Zoom completo"><svg><use href="#zfull"/></svg></button>
  <button class="tb" aria-label="Zoom selezione"><svg><use href="#zsel"/></svg></button>
  <button class="tb" aria-label="Zoom layer"><svg><use href="#zlay"/></svg></button>
  <button class="tb" aria-label="Zoom precedente"><svg><use href="#zlast"/></svg></button>
  <button class="tb" aria-label="Zoom successivo"><svg><use href="#znext"/></svg></button>
  <button class="tb" aria-label="Nuova vista mappa"><svg><use href="#mapview"/></svg></button>
  <button class="tb" aria-label="Nuovo segnalibro"><svg><use href="#bmknew"/></svg></button>
  <button class="tb" aria-label="Segnalibri"><svg><use href="#bmk"/></svg></button>
  <button class="tb" aria-label="Aggiorna"><svg><use href="#refresh"/></svg></button>
  <i class="grip"></i>
  <button class="tb" aria-label="Informazioni elementi"><svg><use href="#ident"/></svg></button>
  <button class="tb" aria-label="Azione" disabled><svg><use href="#action"/></svg></button>
  <button class="dd" aria-label="Altre azioni"><svg><use href="#downg"/></svg></button>
  <button class="tb" aria-label="Seleziona"><svg><use href="#select"/></svg></button>
  <button class="dd" aria-label="Altre selezioni"><svg><use href="#down"/></svg></button>
  <button class="tb" aria-label="Seleziona con espressione"><svg><use href="#selexp"/></svg></button>
  <button class="dd" aria-label="Altre espressioni"><svg><use href="#down"/></svg></button>
  <button class="tb" aria-label="Deseleziona"><svg><use href="#desel"/></svg></button>
  <button class="tb" aria-label="Tabella attributi"><svg><use href="#table"/></svg></button>
  <button class="tb" aria-label="Calcolatore"><svg><use href="#abacus"/></svg></button>
  <button class="tb" aria-label="Strumenti"><svg><use href="#gear"/></svg></button>
  <button class="tb" aria-label="Statistiche"><svg><use href="#sum"/></svg></button>
  <button class="tb" aria-label="Misura"><svg><use href="#measure"/></svg></button>
  <button class="dd" aria-label="Altre misure"><svg><use href="#down"/></svg></button>
  <button class="tb" aria-label="Suggerimenti mappa"><svg><use href="#tip"/></svg></button>
  <button class="tb" aria-label="Annotazione"><svg><use href="#annot"/></svg></button>
  <button class="dd" aria-label="Altre annotazioni"><svg><use href="#down"/></svg></button>
  <i class="grip"></i>
  <button class="tb" aria-label="Aiuto"><svg><use href="#help"/></svg></button>
  <i class="grip wide"></i>
  <button class="tb" aria-label="Aggancio"><svg><use href="#magnet"/></svg></button>
  <button class="tb" aria-label="Layer agganciati" disabled><svg><use href="#vset"/></svg></button>
  <button class="tb" aria-label="Tipo aggancio" disabled><svg><use href="#pts"/></svg></button>
  <span class="spin tolerance off"><input aria-label="Tolleranza" value="0,00" disabled><span class="ud"></span></span>
  <select class="units" aria-label="Unità" disabled><option>metri</option></select>
  <button class="tb" aria-label="Modifica topologica"><svg><use href="#topo"/></svg></button>
  <button class="tb" aria-label="Intersezioni" disabled><svg><use href="#cross"/></svg></button>
  <button class="tb" aria-label="Traccia" disabled><svg><use href="#self"/></svg></button>
  <button class="dd" aria-label="Opzioni traccia"><svg><use href="#downg"/></svg></button>
  <i class="grip"></i>
  <button class="tb" aria-label="Ruota a destra"><svg><use href="#cw"/></svg></button>
  <button class="tb" aria-label="Ruota a sinistra"><svg><use href="#ccw"/></svg></button>
</div>

<div class="toolbar">
  <i class="grip first"></i>
  <button class="tb" aria-label="Sorgenti dati"><svg><use href="#dsm"/></svg></button>
  <button class="tb" aria-label="Nuovo GeoPackage"><svg><use href="#gpkgnew"/></svg></button>
  <button class="tb" aria-label="Nuovo shapefile"><svg><use href="#vnew"/></svg></button>
  <button class="tb" aria-label="Nuovo SpatiaLite"><svg><use href="#spnew"/></svg></button>
  <button class="tb" aria-label="Layer temporaneo"><svg><use href="#mem"/></svg></button>
  <i class="grip"></i>
  <button class="tb" aria-label="Modifiche correnti" disabled><svg><use href="#pens"/></svg></button>
  <button class="tb" aria-label="Modifica layer"><svg><use href="#pencil"/></svg></button>
  <button class="tb" aria-label="Salva modifiche" disabled><svg><use href="#diskg"/></svg></button>
  <button class="tb" aria-label="Aggiungi poligono" disabled><svg><use href="#blobs"/></svg></button>
  <button class="tb" aria-label="Strumento vertici" disabled><svg><use href="#vtool"/></svg></button>
  <button class="dd" aria-label="Altri vertici"><svg><use href="#downg"/></svg></button>
  <button class="tb" aria-label="Modifica attributi" disabled><svg><use href="#tedit"/></svg></button>
  <button class="tb" aria-label="Elimina" disabled><svg><use href="#trash"/></svg></button>
  <button class="tb" aria-label="Taglia" disabled><svg><use href="#cut"/></svg></button>
  <button class="tb" aria-label="Copia" disabled><svg><use href="#copy"/></svg></button>
  <button class="tb" aria-label="Incolla" disabled><svg><use href="#paste"/></svg></button>
  <button class="tb small grey" aria-label="Annulla" disabled><svg><use href="#undo"/></svg></button>
  <button class="tb small grey" aria-label="Ripeti" disabled><svg><use href="#redo"/></svg></button>
  <i class="grip"></i>
  <button class="tb" aria-label="DB Manager"><svg><use href="#db"/></svg></button>
  <i class="grip lead"></i>
  <button class="tb" aria-label="Etichette"><svg><use href="#tag"/></svg></button>
  <button class="tb" aria-label="Diagrammi"><svg><use href="#diag"/></svg></button>
  <button class="tb framed" aria-label="Evidenzia etichette"><svg><use href="#lpin"/></svg></button>
  <button class="tb" aria-label="Blocca etichette"><svg><use href="#lpin"/></svg></button>
  <button class="tb" aria-label="Mostra etichette"><svg><use href="#leye"/></svg></button>
  <button class="tb" aria-label="Sposta etichette"><svg><use href="#lmove"/></svg></button>
  <button class="tb" aria-label="Ruota etichette"><svg><use href="#lrot"/></svg></button>
  <button class="tb" aria-label="Cambia etichette"><svg><use href="#lpen"/></svg></button>
  <i class="grip"></i>
  <button class="tb" aria-label="Arco" disabled><svg><use href="#arc"/></svg></button>
  <button class="dd" aria-label="Altri archi"><svg><use href="#downg"/></svg></button>
  <button class="tb" aria-label="Cerchio" disabled><svg><use href="#circ"/></svg></button>
  <button class="dd" aria-label="Altri cerchi"><svg><use href="#downg"/></svg></button>
  <button class="tb" aria-label="Ellisse" disabled><svg><use href="#elli"/></svg></button>
  <button class="dd" aria-label="Altre ellissi"><svg><use href="#downg"/></svg></button>
  <button class="tb" aria-label="Rettangolo" disabled><svg><use href="#rect"/></svg></button>
  <button class="dd" aria-label="Altri rettangoli"><svg><use href="#downg"/></svg></button>
  <button class="tb" aria-label="Poligono regolare" disabled><svg><use href="#poly"/></svg></button>
  <button class="dd" aria-label="Altri poligoni"><svg><use href="#downg"/></svg></button>
  <i class="grip"></i>
  <button class="tb" aria-label="Taglia elemento" disabled><svg><use href="#a1"/></svg></button>
  <button class="dd" aria-label="Altri tagli"><svg><use href="#downg"/></svg></button>
  <button class="tb" aria-label="Taglia e crea" disabled><svg><use href="#a2"/></svg></button>
  <button class="tb" aria-label="Dividi" disabled><svg><use href="#split"/></svg></button>
  <button class="tb" aria-label="Unisci" disabled><svg><use href="#merge"/></svg></button>
  <button class="tb" aria-label="Unisci attributi" disabled><svg><use href="#mset"/></svg></button>
  <button class="tb" aria-label="Riempi" disabled><svg><use href="#blobd"/></svg></button>
  <button class="tb" aria-label="Svuota" disabled><svg><use href="#blobh"/></svg></button>
  <button class="tb" aria-label="Anello" disabled><svg><use href="#ringadd"/></svg></button>
  <button class="dd" aria-label="Altri anelli"><svg><use href="#downg"/></svg></button>
  <button class="tb" aria-label="Riempi anello" disabled><svg><use href="#ringfill"/></svg></button>
  <button class="dd" aria-label="Altri riempimenti"><svg><use href="#downg"/></svg></button>
  <button class="tb" aria-label="Intersezione" disabled><svg><use href="#ringfill"/></svg></button>
  <button class="tb" aria-label="Ritaglia" disabled><svg><use href="#clip"/></svg></button>
  <button class="tb" aria-label="Ruota vertici" disabled><svg><use href="#vrot"/></svg></button>
  <button class="dd" aria-label="Altri vertici"><svg><use href="#downg"/></svg></button>
  <button class="tb" aria-label="Unione j" disabled><svg><use href="#toothj"/></svg></button>
  <button class="tb" aria-label="Unione d" disabled><svg><use href="#toothd"/></svg></button>
  <button class="tb" aria-label="Unione bordo" disabled><svg><use href="#toothj"/></svg></button>
  <button class="tb" aria-label="Parallele" disabled><svg><use href="#par"/></svg></button>
</div>

<main class="work">
  <div class="sidebar">
    <i class="hgrip"></i>
    <button class="sb" aria-label="Squadra"><svg><use href="#square"/></svg></button>
    <span class="sb pair"><button aria-label="Sposta elemento"><svg><use href="#fmove"/></svg></button><button class="dd" aria-label="Altri spostamenti"><svg><use href="#downg"/></svg></button></span>
    <button class="sb" aria-label="Ruota elemento"><svg><use href="#frot"/></svg></button>
    <button class="sb" aria-label="Semplifica"><svg><use href="#simp"/></svg></button>
    <button class="sb" aria-label="Aggiungi anello"><svg><use href="#ringadd"/></svg></button>
    <button class="sb" aria-label="Aggiungi parte"><svg><use href="#partadd"/></svg></button>
    <button class="sb" aria-label="Riempi anello"><svg><use href="#ringfill"/></svg></button>
    <button class="sb" aria-label="Elimina anello"><svg><use href="#ringdel"/></svg></button>
    <button class="sb" aria-label="Elimina parte"><svg><use href="#partdel"/></svg></button>
    <button class="sb" aria-label="Rimodella"><svg><use href="#reshape"/></svg></button>
    <button class="sb" aria-label="Curva offset"><svg><use href="#offset"/></svg></button>
    <button class="sb" aria-label="Inverti linea"><svg><use href="#vrot"/></svg></button>
    <button class="sb" aria-label="Dividi elementi"><svg><use href="#split"/></svg></button>
    <button class="sb" aria-label="Dividi parti"><svg><use href="#splitp"/></svg></button>
    <button class="sb" aria-label="Unisci elementi"><svg><use href="#merge"/></svg></button>
    <button class="sb" aria-label="Unisci attributi"><svg><use href="#mfeat"/></svg></button>
    <span class="sb pair"><button aria-label="Ruota simboli"><svg><use href="#rotpt"/></svg></button><button class="dd" aria-label="Altri simboli"><svg><use href="#downg"/></svg></button></span>
    <i class="hgrip"></i>
    <button class="sb" aria-label="Controllo geometrie"><svg><use href="#vcheck"/></svg></button>
    <i class="hgrip"></i>
    <button class="sb" aria-label="Triangolazione"><svg><use href="#tri"/></svg></button>
    <span class="sb pair"><button aria-label="Aggiungi servizio"><svg><use href="#gadd"/></svg></button></span>
    <button class="sb" aria-label="Cerca servizio"><svg><use href="#gfind"/></svg></button>
    <button class="sb" aria-label="MetaSearch"><svg><use href="#bino"/></svg></button>
  </div>

  <div class="docks">
    <section class="dock">
      <div class="dockhead"><h2>Layer</h2><button aria-label="Sgancia"><svg><use href="#float"/></svg></button><button aria-label="Chiudi pannello"><svg><use href="#close"/></svg></button></div>
      <div class="minibar">
        <button class="on" aria-label="Stile"><svg><use href="#brush"/></svg></button>
        <button aria-label="Aggiungi gruppo"><svg><use href="#grpadd"/></svg></button>
        <button aria-label="Temi"><svg><use href="#eye"/></svg></button>
        <button aria-label="Filtra"><svg><use href="#funnel"/></svg></button>
        <button aria-label="Filtra con espressione"><svg><use href="#efun"/></svg></button>
        <button class="dd" aria-label="Altri filtri"><svg><use href="#down"/></svg></button>
        <button aria-label="Espandi"><svg><use href="#expand"/></svg></button>
        <button aria-label="Comprimi"><svg><use href="#collapse"/></svg></button>
        <button aria-label="Rimuovi"><svg><use href="#remove"/></svg></button>
      </div>
      <ul class="tree layers">
        <li class="current"><input type="checkbox" id="l1" checked><i class="swatch olive"></i><label for="l1"><u>circoscrizioni</u></label></li>
        <li><input type="checkbox" id="l2" checked><i class="swatch pink"></i><label for="l2">quartieri</label></li>
      </ul>
    </section>
    <i class="hgrip split"></i>
    <section class="dock browser">
      <div class="dockhead"><h2>Browser</h2><button aria-label="Sgancia"><svg><use href="#float"/></svg></button><button aria-label="Chiudi pannello"><svg><use href="#close"/></svg></button></div>
      <div class="minibar">
        <button aria-label="Aggiungi layer"><svg><use href="#add"/></svg></button>
        <button aria-label="Aggiorna"><svg><use href="#refresh"/></svg></button>
        <button aria-label="Filtra"><svg><use href="#funnel"/></svg></button>
        <button aria-label="Comprimi tutto"><svg><use href="#collapse"/></svg></button>
        <button aria-label="Proprietà"><svg><use href="#info"/></svg></button>
      </div>
      <ul class="tree sources">
        <li><svg class="ar"><use href="#tarrow"/></svg><svg><use href="#star"/></svg>Preferiti</li>
        <li><svg class="ar"><use href="#tarrow"/></svg><svg><use href="#home"/></svg>Home</li>
        <li><svg class="ar"><use href="#tarrow"/></svg><svg><use href="#folder"/></svg>C:\</li>
        <li><svg class="ar"><use href="#tarrow"/></svg><svg><use href="#folder"/></svg>D:\</li>
        <li><svg class="ar"><use href="#tarrow"/></svg><svg><use href="#folder"/></svg>E:\</li>
        <li><svg class="ar"><use href="#tarrow"/></svg><svg><use href="#folder"/></svg>F:\</li>
        <li><svg class="ar"><use href="#tarrow"/></svg><svg><use href="#gpkg"/></svg>GeoPackage</li>
        <li><svg class="ar"><use href="#tarrow"/></svg><svg><use href="#feather"/></svg>SpatiaLite</li>
        <li><svg class="ar"><use href="#tarrow"/></svg><svg><use href="#pg"/></svg>PostGIS</li>
        <li><svg class="ar"><use href="#tarrow"/></svg><svg><use href="#ms"/></svg>MSSQL</li>
        <li><svg class="ar"><use href="#tarrow"/></svg><svg><use href="#db2"/></svg>DB2</li>
        <li><svg class="ar"><use href="#tarrow"/></svg><svg><use href="#globe"/></svg>WMS/WMTS</li>
        <li><svg class="ar"><use href="#tarrow"/></svg><svg><use href="#globe"/></svg>XYZ Tiles</li>
        <li><svg class="ar"><use href="#tarrow"/></svg><svg><use href="#wcs"/></svg>WCS</li>
        <li><svg class="ar"><use href="#tarrow"/></svg><svg><use href="#wfs"/></svg>WFS</li>
        <li><svg class="ar"><use href="#tarrow"/></svg><svg><use href="#ows"/></svg>OWS</li>
        <li><svg class="ar"></svg><svg><use href="#ams"/></svg>ArcGisMapServer</li>
        <li><svg class="ar"><use href="#tarrow"/></svg><svg><use href="#afs"/></svg>ArcGisFeatureServer</li>
        <li><svg class="ar"><use href="#tarrow"/></svg><svg><use href="#node"/></svg>GeoNode</li>
      </ul>
    </section>
  </div>
  <i class="vgrip"></i>

  <div class="map">
    <svg viewBox="378 131 1072 916" role="img" aria-label="Mappa dei quartieri">
      <g class="land">
        <path transform="translate(480 130) scale(.3699 .3333)" d="M147 1380L195 1330 202 1318 210 1285 248 1250 295 1192 302 1165 307 1142 294 1142 280 1050 278 1028 238 992 228 950 218 930 212 898 217 884 288 880 302 874 350 820 378 771 357 676 390 670 432 635 412 612 405 595 390 576 410 551 397 515 393 486 360 438 318 424 295 426 270 434 252 427 246 386 308 403 330 395 345 373 358 371 369 383 368 415 392 445 412 455 422 447 433 428 436 408 450 384 470 366 496 347 497 290 489 270 492 262 508 272 512 290 532 290 555 268 580 256 615 222 632 184 695 147 735 122 790 119 829 103 836 88 850 71 888 73 900 95 918 128 932 155 933 180 937 200 936 232 965 253 992 265 1004 254 1017 260 1015 273 1002 305 990 330 970 340 963 352 966 385 980 408 992 435 1025 472 1047 488 1065 489 1072 479 1105 495 1125 527 1140 535 1152 548 1185 576 1235 578 1280 576 1300 567 1315 570 1322 600 1345 650 1370 685 1387 720 1392 760 1392 795 1394 920 1200 1380z"/>
        <path transform="translate(900 300) scale(.3333)" d="M0 270L287 270 286 287 298 300 300 325 286 350 292 380 287 413 322 455 345 505 360 565 375 622 396 652 383 655 382 672 358 682 352 690 340 715 337 750 320 770 302 775 308 798 345 820 362 826 358 832 345 828 318 825 312 835 318 875 328 888 315 893 310 900 325 975 318 978 303 905 285 908 272 905 228 925 235 978 262 975 262 982 230 990 233 1003 278 998 280 1006 238 1013 242 1028 288 1024 290 1033 248 1038 253 1051 303 1055 313 1083 313 1097 280 1128 274 1140 285 1150 300 1135 325 1117 332 1130 352 1143 400 1200 420 1232 414 1242 445 1277 475 1307 560 1357 600 1382 640 1384 675 1403 710 1440 0 1440z"/>
        <path transform="translate(480 540) scale(.3333)" d="M295 0L262 30 235 55 222 95 168 149 140 155 128 198 143 262 168 330 181 355 172 388 145 445 122 465 120 520 82 590 68 645 70 658 128 661 155 648 190 645 240 624 288 620 292 612 308 626 355 632 400 624 422 613 455 606 505 611 535 597 552 580 577 571 600 578 628 571 642 574 637 600 624 626 642 652 652 675 668 690 718 697 750 718 775 703 796 740 796 760 787 770 778 798 790 808 769 833 780 846 760 866 768 885 766 915 755 923 770 940 778 975 789 1003 778 1012 775 1028 757 1038 772 1070 767 1081 825 1084 848 1075 858 1060 875 1045 886 1026 907 1052 896 1085 907 1100 915 1148 922 1154 935 1153 943 1140 958 1138 960 1150 990 1165 1010 1195 1027 1221 1002 1258 995 1290 960 1330 930 1358 893 1383 889 1395 905 1425 940 1443 980 1443 998 1455 1012 1440 1025 1420 1062 1400 1074 1372 1105 1343 1120 1333 1142 1352 1160 1361 1195 1352 1237 1349 1237 1312 1265 1297 1290 1280 1320 1280 1360 1295 1378 1288 1395 1268 1418 1252 1424 1243 1455 1253 1480 1273 1497 1266 1510 1271 1530 1255 1548 1225 1550 1205 1545 1168 1535 1155 1533 1140 1560 1136 1560 500 1400 400 1400 0z"/>
        <path transform="translate(880 660) scale(.3333)" d="M388 50L420 68 460 122 480 155 475 168 503 198 530 228 620 275 630 290 660 302 700 305 732 320 768 360 820 377 860 384 905 393 928 387 990 395 1055 379 1065 383 1100 418 1140 438 1225 451 1325 441 1314 447 1309 463 1337 486 1324 538 1290 525 1275 515 1248 488 1235 496 1195 508 1192 520 1222 550 1212 572 1210 584 1155 586 1141 574 1112 574 1121 640 1080 662 1074 680 1075 702 1117 720 1123 770 1117 776 1125 785 1127 820 1123 850 1080 882 1078 895 1060 905 1057 922 1035 925 1018 951 980 941 972 947 975 962 965 978 955 972 950 962 920 972 898 965 892 975 880 984 825 982 812 971 748 965 745 950 730 937 732 921 700 912 690 895 655 860 628 860 618 867 575 850 528 828 500 838 460 836 440 843 410 825 370 783 350 775 335 780 335 795 348 812 347 835 350 855 343 885 322 908 298 908 280 913 258 892 225 883 195 905 175 932 155 935 120 921 88 921 38 950 37 990 0 992 0 150 380 150z"/>
      </g>
      <g class="district" stroke-width="1.4">
        <path transform="translate(480 130) scale(.3699 .3333)" d="M747 122L748 147 725 152 718 182 700 208 665 232 655 250 638 262 630 315 603 352 590 332 580 345 566 350 565 372 578 385 592 383 597 440 585 463 660 558 660 575 645 596 670 592 694 570 745 635 759 641 750 672 730 687 735 722 778 770 800 812 808 837M759 641L770 634 785 655 800 647 850 655 890 747 960 708 1020 697 1045 690 1058 758 1077 755M280 1032L370 1087 447 1062 522 1118 680 1124 672 1100 650 1080 660 1068 690 1070 710 1063 730 1082 737 1075 728 1055 735 1042 712 1045 712 1025 703 1020 710 1005 740 990 760 975 952 1198 948 1210 970 1260 985 1255 1005 1298 1007 1343M1347 790L1355 842 1332 858 1330 905 1320 970 1335 1000 1350 1055 1382 1080 1360 1110 1362 1165 1375 1190 1420 1250 1437 1256M1168 1218L1200 1282 1215 1280 1240 1325 1255 1345 1257 1380"/>
        <path transform="translate(480 540) scale(.3333)" d="M730 143L778 218 825 224 910 179M825 224L785 242 775 310 778 345 805 385 820 390 822 400M1117 114L1105 230 1093 330 1083 415 1097 610M1093 318L1103 332 1165 305 1240 292 1245 280 1255 280M1236 240L1255 262 1308 241 1318 252 1355 252 1365 262 1408 233 1410 205 1425 193 1443 208 1445 202 1485 190 1488 205M1425 193L1408 175 1395 150M946 421L982 553 922 560 912 580 918 588 898 612 930 632 950 653 1040 640 1075 620 1136 600 1140 638 1150 640 1190 697 1198 707 1212 678 1228 690 1258 655 1295 620 1335 605 1345 590 1393 587M1198 707L1165 760 1165 770 1258 860M950 653L925 661 860 658 852 738 842 740 830 765 805 790 795 807M1090 505L1115 520 1125 515 1165 539 1220 537 1258 525 1275 515 1310 508 1355 495"/>
        <path transform="translate(900 300) scale(.3333)" d="M170 1118L250 1284"/>
        <path transform="translate(880 660) scale(.3333)" d="M503 200L460 225 435 250 410 282M420 290L440 290 455 300 485 345 630 462 685 505 870 572M262 388L268 380 290 422 318 448 372 412 385 445 413 502 445 480 462 484M537 533L555 568 572 577 576 610 567 655 578 672 565 695 555 730 565 760 545 795 523 815 528 828"/>
      </g>
      <g class="border" stroke-width="1.4">
        <path transform="translate(480 130) scale(.3699 .3333)" d="M195 1330L202 1318 210 1285 248 1250 295 1192 302 1165 300 1155 307 1142 294 1142 280 1050 278 1028 238 992 228 950 218 930 212 898 217 884 288 880 302 874 350 820 378 771 357 676 390 670 432 635 412 612 405 595 390 576 410 551 397 515 393 486 360 438 318 424 295 426 270 434 252 427 246 386 308 403 330 395 345 373 358 371 369 383 368 415 392 445 412 455 422 447 433 428 436 408 450 384 470 366 496 347 497 290 489 270 492 262 508 272 512 290 532 290 555 268 580 256 600 235 615 222 632 184 695 147 715 132 735 122 768 116 790 119 829 103 836 88 850 71 888 73 900 95 918 128 932 155 933 180 937 200 936 232 965 253 992 265 1004 254 1017 260 1015 273 1002 305 990 330 970 340 963 352 966 385 980 408 992 435 1025 472 1047 488 1065 489 1072 479 1105 495 1125 527 1140 535 1152 548 1185 576 1215 576 1220 572 1235 578 1280 576 1300 567 1315 570 1322 600 1345 650 1370 685 1387 720 1392 760 1392 795"/>
        <path transform="translate(480 130) scale(.3699 .3333)" d="M378 771L565 897 571 923 595 923 633 937 680 887 712 860 720 845 747 884 808 837 822 840 845 900 881 974 888 969 958 964 967 1006 1016 978 1015 966 1035 962 1060 966 1115 930 1133 934 1130 928 1142 920 1125 917 1112 850 1098 838 1077 755 1118 693 1145 684 1203 674 1210 688 1235 672 1245 648 1270 648 1290 660 1300 697 1325 707 1340 725 1345 745 1345 790 1393 784M1133 934L1145 965 1165 980 1162 1010 1174 1026 1160 1035 1165 1058 1195 1056 1200 1065 1193 1075 1205 1102 1228 1105 1247 1133 1265 1120 1258 1116 1245 1130M1258 1128L1143 1241 1110 1227 1055 1262 1055 1272 1028 1287 1018 1278 1017 1305 1008 1312 1007 1343M195 1330L388 1249 520 1311 628 1313 632 1338 652 1358 664 1372 670 1340 697 1345 705 1315 738 1325 742 1313 766 1330 770 1314 826 1337"/>
        <path transform="translate(900 300) scale(.3333)" d="M286 287L298 300 300 325 286 350 292 380 287 413 312 442 320 440M312 442L322 455 345 505 360 565 375 622 396 652 383 655 382 672 377 675 373 692M382 672L358 682 352 690 340 715 337 750 320 770 302 775 308 798 345 820 362 826 358 832 345 828 318 825 312 835 318 875 328 888 315 893 310 900 325 975 318 978 303 905 285 908 272 905 228 925 235 978 262 975 262 982 230 990 233 1003 278 998 280 1006 238 1013 242 1028 288 1024 290 1033 248 1038 253 1051 303 1055 313 1083 313 1097 280 1128 274 1140 285 1150 300 1135 325 1117 332 1130 352 1143 400 1200 425 1235 414 1230 414 1242 445 1277 475 1307 560 1357 570 1366 600 1382 640 1384 675 1403 710 1440M0 1100L28 1092 70 1130 75 1148 120 1142 150 1130 170 1118 220 1100 313 1083M75 1148L85 1145 80 1183 100 1220 102 1250 86 1262 135 1314 198 1384M135 1314L250 1284 262 1280 400 1202M262 1280L274 1302 265 1310 305 1340 350 1365M292 930L306 926M290 948L308 943M306 786L322 790 305 796"/>
        <path class="pier" transform="translate(480 130) scale(.3699 .3333)" d="M413 416L432 416M937 186L948 190 954 208M1217 574L1225 556 1247 556M975 395L983 398 980 408"/>
        <path class="pier" transform="translate(900 300) scale(.3333)" d="M396 652L397 680 388 708M335 752L357 770M345 775L337 812M362 826L385 905 397 930M376 1040L428 1093M333 1047L342 1103 328 1117M320 828L333 872M329 826L342 872M337 826L347 872M353 684L368 692"/>
        <path class="mole" transform="translate(900 300) scale(.3333)" d="M320 942L348 937 376 1040"/>
        <path class="deck" transform="translate(900 300) scale(.3333)" d="M318 942L348 938 375 1038"/>
        <path transform="translate(480 540) scale(.3333)" d="M217 100L168 149 140 155 128 198 143 262 168 330 181 355 172 388 145 445 122 465 120 520 82 590 68 645 70 658 128 661 155 648 190 645 240 624 288 620 292 612 308 626 355 632 400 624 422 613 455 606 505 611 535 597 552 580 577 571 600 578 628 571 642 574 637 600 624 626 642 652 652 675 668 690 718 697 750 718 775 703 796 740 796 760 787 770 778 798 790 808 769 833 780 846 760 866 768 885 766 915 755 923 770 940 778 975 789 1003 778 1012 775 1028 757 1038 772 1070 767 1081 825 1084 848 1075 858 1060 875 1045 886 1026 907 1052 896 1085 907 1100 915 1148 922 1154 935 1153 943 1140 958 1138 960 1150 990 1165 1010 1195 1027 1221 1002 1258 995 1290 960 1330 930 1358 893 1383 889 1395 905 1425 940 1443 980 1443 998 1455 1012 1440 1025 1420 1062 1400 1074 1372 1105 1343 1120 1333 1142 1352 1160 1361 1195 1352 1237 1349 1237 1312 1265 1297 1290 1280 1320 1280 1360 1295 1378 1288 1395 1268 1418 1252 1424 1243 1455 1253 1480 1273 1497 1266 1510 1271 1530 1255 1548 1225 1550 1205 1545 1168 1535 1155 1533 1140 1550 1134"/>
        <path transform="translate(480 540) scale(.3333)" d="M916 107L908 148 910 179 960 155 1117 114M1138 55L1200 140 1223 190 1225 240 1236 242 1262 300 1268 330 1281 375M181 355L225 385 372 425 382 410 388 388 430 355 460 350 471 339 602 387 602 427 640 442 704 450 740 423 800 407 875 383 888 376 930 381 932 392 946 421 970 408 1010 406 1085 415 1137 427 1205 418 1225 408 1225 393 1281 375M1200 884L1175 900 1170 918 1140 927 1105 957 1080 973 1045 990 1045 998 1030 997 1010 1030 1024 1085 1015 1140 958 1136M1259 1283h5"/>
        <path transform="translate(880 660) scale(.3333)" d="M768 360L820 377 860 384 905 393 915 384 912 392 925 394 928 387 990 395 1055 379 1065 383 1100 418 1140 438 1225 451 1325 441 1314 447 1309 463 1337 486 1324 538 1290 525 1275 515 1248 488 1235 496 1195 508 1192 520 1222 550 1212 572 1210 584 1155 586 1141 574 878 571 878 577 740 562 640 547 575 530 537 533 530 522 532 513 500 495 462 484 458 460 463 436 440 422 415 385 397 378 425 335 428 310 410 285 385 275M1112 574L1121 640 1080 662 1074 680 1075 702 1117 720 1123 770 1117 776 1125 785 1127 820 1123 850 1080 882 1078 895 1060 905 1057 922 1035 925 1018 951 980 941 972 947 975 962 965 978 955 972 950 962 920 972 898 965 892 975 880 984 825 982 812 971 748 965 745 950 730 937 732 921 700 912 690 895 655 860 628 860 618 867 575 850 528 828 500 838 460 836 440 843 410 825 370 783 350 775M258 304L271 320 228 365 226 385 245 383 258 395 250 407 222 403 215 425 203 425 197 397 185 400 170 420 183 440 175 458 160 460 145 450 145 434 135 450 135 470 150 487 125 508 108 490 97 476 60 502 38 530 0 523"/>
      </g>
      <text class="watermark" transform="translate(744 660) rotate(-24)">Pigrecoinfinito</text>
      <g class="labels">
        <text x="820" y="278">22</text><text x="696" y="329">21</text><text x="836" y="399">23</text><text x="745" y="465">20</text><text x="958" y="469">24</text><text x="1006" y="469">25</text><text x="730" y="532">19</text><text x="913" y="578">9</text><text x="646" y="614">18</text><text x="809" y="628">17</text><text x="871" y="606">8</text><text x="955" y="640">10</text><text x="877" y="658">7</text><text x="671" y="711">16</text><text x="827" y="713">15</text><text x="891" y="700">6</text><text x="956" y="703">2</text><text x="997" y="688">1</text><text x="893" y="741">5</text><text x="924" y="777">4</text><text x="1003" y="755">3</text><text x="816" y="822">14</text><text x="941" y="896">13</text><text x="1155" y="891">12</text><text x="1172" y="800">11</text>
      </g>
      <text class="credit" x="1445" y="1037">© Salvatore Fiandaca 2018 QGIS 3.4 MADEIRA</text>
    </svg>
  </div>

  <i class="vgrip east"></i>
  <section class="style">
    <div class="dockhead"><h2>Stile layer</h2><button aria-label="Sgancia"><svg><use href="#float"/></svg></button><button aria-label="Chiudi pannello"><svg><use href="#close"/></svg></button></div>
    <div class="combo layerpick"><svg><use href="#polyl"/></svg><select aria-label="Layer"><option>quartieri</option></select></div>
    <div class="stylebody">
      <div class="strip">
        <button aria-label="Simbologia"><svg><use href="#brush"/></svg></button>
        <button class="sel" aria-label="Etichette"><svg><use href="#gtag"/></svg></button>
        <button aria-label="Vista 3D"><svg><use href="#cube"/></svg></button>
        <button aria-label="Diagrammi"><svg><use href="#diagb"/></svg></button>
        <button aria-label="Storia"><svg><use href="#hist"/></svg></button>
      </div>
      <div class="form">
        <div class="line"><div class="combo grow"><svg><use href="#tagmid"/></svg><select aria-label="Modo etichette"><option>Etichette singole</option></select></div><button class="btn place" aria-label="Posizionamento"><svg><use href="#place"/></svg></button></div>
        <div class="line second"><label for="lw">Etichetta con</label><div class="combo white grow"><b>123</b><select id="lw"><option>QUA_ID</option></select></div><button class="btn eps" aria-label="Espressione">ε</button></div>
        <div class="tabs" role="tablist">
          <button class="cur" role="tab"><b>abc</b></button><button role="tab"><span class="fmt"><i>+</i>ab<br><i>&lt;</i>&nbsp;&nbsp;c</span></button><button role="tab" aria-label="Contorno"><svg><use href="#halo"/></svg></button><button role="tab" aria-label="Sfondo"><svg><use href="#shield"/></svg></button><button role="tab" aria-label="Ombra"><svg><use href="#shadow"/></svg></button><button role="tab" aria-label="Posizione"><svg class="mv"><use href="#moves"/></svg></button><button role="tab" aria-label="Visualizzazione"><svg><use href="#pbrush"/></svg></button>
        </div>
        <div class="pane">
          <h3>Testo</h3>
          <div class="row"><label for="f1">Carattere</label><div class="ctl"><select id="f1"><option>MS Shell Dlg 2</option></select></div><button class="ddo" aria-label="Dati carattere"><svg><use href="#ddo"/></svg></button></div>
          <div class="row spaced"><label for="f2">Stile</label><div class="ctl"><select id="f2"><option>Normale</option></select></div><button class="ddo" aria-label="Dati stile"><svg><use href="#ddo"/></svg></button></div>
          <div class="row"><span></span><div class="ctl bius"><button class="sq"><u>U</u></button><button class="ddo" aria-label="Dati sottolineato"><svg><use href="#ddo"/></svg></button><button class="sq"><s>S</s></button><button class="ddo" aria-label="Dati barrato"><svg><use href="#ddo"/></svg></button><button class="sq far" disabled>B</button><button class="ddo" aria-label="Dati grassetto"><svg><use href="#ddo"/></svg></button><button class="sq" disabled>I</button></div><button class="ddo" aria-label="Dati corsivo"><svg><use href="#ddo"/></svg></button></div>
          <div class="row"><label for="f3">Dimensione</label><div class="ctl"><span class="spin"><input id="f3" value="10,0000"><span class="ud"></span></span></div><button class="ddo" aria-label="Dati dimensione"><svg><use href="#ddo"/></svg></button></div>
          <div class="row"><span></span><div class="ctl"><select aria-label="Unità dimensione"><option>Punti</option></select></div><button class="ddo" aria-label="Dati unità"><svg><use href="#ddo"/></svg></button></div>
          <div class="row"><label for="f4">Colore</label><div class="ctl color"><button id="f4" class="swbtn" aria-label="Colore testo"><i></i></button><button class="swdd" aria-label="Menu colore"><svg><use href="#down"/></svg></button></div><button class="ddo" aria-label="Dati colore"><svg><use href="#ddo"/></svg></button></div>
          <div class="row"><label for="f5">Opacità</label><div class="ctl opac"><input type="range" id="f5" value="100"><span class="spin"><input aria-label="Opacità percentuale" value="100,0 %"><span class="ud top"></span></span></div><button class="ddo" aria-label="Dati opacità"><svg><use href="#ddo"/></svg></button></div>
          <div class="row spaced"><label for="f6">Tipo maiuscolo</label><div class="ctl"><select id="f6"><option>Nessun cambiamento</option></select></div><button class="ddo" aria-label="Dati maiuscolo"><svg><use href="#ddo"/></svg></button></div>
          <div class="row"><span>Spaziatura</span><div class="ctl sub"><label for="f7">lettera</label><span class="spin"><input id="f7" value="0,0000"><span class="ud"></span></span></div><button class="ddo" aria-label="Dati lettera"><svg><use href="#ddo"/></svg></button></div>
          <div class="row"><span></span><div class="ctl sub"><label for="f8">parola</label><span class="spin"><input id="f8" value="0,0000"><span class="ud"></span></span></div><button class="ddo" aria-label="Dati parola"><svg><use href="#ddo"/></svg></button></div>
          <div class="row"><label for="f9">Modalità fusione</label><div class="ctl"><select id="f9"><option>Normale</option></select></div><button class="ddo" aria-label="Dati fusione"><svg><use href="#ddo"/></svg></button></div>
          <div class="subst"><input type="checkbox" id="f10"><label for="f10">Applica sostituzione testo etichetta</label><button class="sq" disabled>...</button></div>
        </div>
        <div class="foot">
          <button class="btn hist" aria-label="Annulla"><svg class="orange"><use href="#undo"/></svg></button>
          <button class="btn hist" aria-label="Ripeti"><svg class="green"><use href="#redo"/></svg></button>
          <input type="checkbox" id="live" checked><label for="live">Aggiornamento immediato</label>
          <button class="btn apply">Applica</button>
        </div>
      </div>
    </div>
  </section>
</main>

<footer class="status">
  <div class="locator"><svg><use href="#search"/></svg><input aria-label="Localizzatore" placeholder="Digita per localizzare (Ctrl+K)"></div>
  <span class="msg">1 voce in legenda eliminata.</span>
  <label for="s1">Coordinate</label><input id="s1" class="coord" value="2385323,4228741"><svg class="mouse"><use href="#mouse"/></svg>
  <label for="s2" class="scl">Scala</label><div class="combo white scale"><select id="s2"><option>1:104999</option></select></div><svg class="lock"><use href="#lock"/></svg>
  <label for="s3">Lente d'ingrandimento</label><span class="spin mag"><input id="s3" value="100%"><span class="ud"></span></span>
  <label for="s4" class="rotl">Rotazione</label><span class="spin rot"><input id="s4" value="0,0 °"><span class="ud"></span></span>
  <input type="checkbox" id="s5" checked><label for="s5" class="vis">Visualizza</label>
  <a class="epsg" href="#"><svg><use href="#crs"/></svg>EPSG:3004</a>
  <button class="bub" aria-label="Messaggi"><svg><use href="#bubble"/></svg></button>
</footer>
</body>
</html>
```

FILE: styles.css
```css
* { box-sizing: border-box; }
body { margin: 0; height: 100vh; display: flex; flex-direction: column; background: #f0f0f0; color: #000; font: 13px/18px "Open Sans", "Noto Sans", sans-serif; border-bottom: 2px solid #222; overflow: hidden; }
button, input, select { font: inherit; color: inherit; margin: 0; }
button { border: 0; padding: 0; background: none; display: inline-flex; align-items: center; justify-content: center; flex: none; }
h1, h2, h3, ul { margin: 0; padding: 0; font-weight: 400; list-style: none; }
svg { flex: none; }
.defs { position: absolute; width: 0; height: 0; }

/* window chrome */
.titlebar { height: 29px; flex: none; background: #fff; display: flex; align-items: center; padding: 0 3px 0 2px; }
.titlebar h1 { font-size: 14px; margin-left: 5px; flex: 1; }
.logo { width: 20px; height: 20px; }
.winbtns button { width: 58px; height: 29px; }
.winbtns svg { width: 12px; height: 12px; }
.menubar { height: 23px; flex: none; display: flex; gap: 16px; align-items: center; padding-left: 11px; border-bottom: 1px solid #d0d0d0; }
.menubar a { color: #000; text-decoration: none; }
.menubar u, .layers u { text-underline-offset: 2px; }

/* toolbars */
.toolbar { height: 39px; flex: none; display: flex; align-items: center; background: linear-gradient(#fafafa, #eee); border-bottom: 1px solid #b8b8b8; }
.tb { width: 33px; height: 32px; }
.tb svg { width: 24px; height: 24px; }
.tb.small svg { width: 18px; height: 18px; }
.grey { fill: #b5b5b5; }
.tb.on { background: #dcdcdc; border: 1px solid #b0b0b0; border-radius: 3px; }
.tb.framed svg { outline: 1px solid #2a7ad4; }
.dd { width: 15px; height: 24px; }
.dd svg { width: 10px; height: 6px; }
.grip, .hgrip, .vgrip { display: block; flex: none; background: radial-gradient(circle, #b8b8b8 40%, transparent 50%) 0 0 / 3px 3px; }
.grip { width: 5px; height: 22px; margin: 0 6px 0 7px; }
.grip.first { margin: 0 4px 0 5px; }
.grip.wide { margin-left: 29px; }
.grip.lead { margin-right: 9px; }
.tolerance { width: 100px; height: 24px; flex: none; margin-right: 3px; }
.toolbar .units { width: 64px; height: 26px; flex: none; margin-right: 1px; padding-left: 4px; background-position: right 8px center; color: #777; }

/* form controls */
select { appearance: none; width: 100%; height: 26px; padding: 0 24px 0 5px; border: 1px solid #aaa; border-radius: 3px; opacity: 1; background: url("data:image/svg+xml,%3Csvg xmlns='http://www.w3.org/2000/svg' width='10' height='5'%3E%3Cpath d='M0 0h10L5 5z' fill='%23555'/%3E%3C/svg%3E") right 10px center no-repeat, linear-gradient(#fff, #ececec); }
.combo { display: flex; align-items: center; height: 28px; padding-left: 5px; border: 1px solid #aaa; border-radius: 3px; background: linear-gradient(#fff, #ececec); }
.combo select { border: 0; background-image: url("data:image/svg+xml,%3Csvg xmlns='http://www.w3.org/2000/svg' width='10' height='5'%3E%3Cpath d='M0 0h10L5 5z' fill='%23555'/%3E%3C/svg%3E"); background-color: transparent; height: 100%; padding-left: 4px; }
.combo svg { width: 20px; height: 20px; }
.combo.white { background: #fff; }
.combo b { color: #666; }
.spin { display: flex; height: 24px; border: 1px solid #aaa; border-radius: 3px; background: #fff; }
.spin input { flex: 1; min-width: 0; width: 0; border: 0; padding: 0 4px; background: none; outline: 0; }
.ud { width: 17px; flex: none; border-left: 1px solid #aaa; background: url("data:image/svg+xml,%3Csvg xmlns='http://www.w3.org/2000/svg' width='10' height='14'%3E%3Cpath d='M0 5h10L5 0zM0 9h10l-5 5z' fill='%23555'/%3E%3C/svg%3E") center no-repeat; }
.ud.top { background-image: url("data:image/svg+xml,%3Csvg xmlns='http://www.w3.org/2000/svg' width='10' height='14'%3E%3Cpath d='M0 5h10L5 0z' fill='%23aaa'/%3E%3Cpath d='M0 9h10l-5 5z' fill='%23555'/%3E%3C/svg%3E"); }
.off { background: #ececec; color: #777; }
.off .ud { background-image: url("data:image/svg+xml,%3Csvg xmlns='http://www.w3.org/2000/svg' width='10' height='14'%3E%3Cpath d='M0 5h10L5 0z' fill='%23888'/%3E%3Cpath d='M0 9h10l-5 5z' fill='%23bbb'/%3E%3C/svg%3E"); }
.toolbar .units { background-image: url("data:image/svg+xml,%3Csvg xmlns='http://www.w3.org/2000/svg' width='10' height='5'%3E%3Cpath d='M0 0h10L5 5z' fill='%23999'/%3E%3C/svg%3E"), linear-gradient(#fcfcfc, #f0f0f0); border-color: #c4c4c4; }
input[type=checkbox] { appearance: none; width: 17px; height: 17px; flex: none; border: 1px solid #b8b8b8; background: #fff; }
input[type=checkbox]:checked { background: #fff url("data:image/svg+xml,%3Csvg xmlns='http://www.w3.org/2000/svg' width='11' height='12'%3E%3Cpath d='M1 6l3 5L10 1' fill='none' stroke='%23000' stroke-width='2'/%3E%3C/svg%3E") center no-repeat; }
.btn, .sq { border: 1px solid #b8b8b8; border-radius: 3px; background: linear-gradient(#fff, #f0f0f0); }
.sq { width: 24px; height: 24px; }
.sq:disabled { color: #888; border-color: #ccc; }

/* work area */
.work { flex: 1; min-height: 0; display: flex; }
.sidebar { width: 54px; flex: none; padding-top: 5px; display: flex; flex-direction: column; align-items: center; background: linear-gradient(90deg, #fbfbfb, #eee); }
.sb { height: 32px; width: 54px; flex: none; }
.sb svg { width: 24px; height: 24px; }
.pair { display: flex; align-items: center; padding-left: 8px; gap: 3px; }
.sb .dd { width: 16px; }
.sb .dd svg { width: 10px; height: 6px; }
.hgrip { width: 17px; height: 5px; margin: 0 0 4px; }
.sb + .hgrip { margin: 8px 0 5px; }
.docks { width: 316px; flex: none; display: flex; flex-direction: column; border-left: 1px solid #b8b8b8; }
.dock { flex: 426 1 0; min-height: 0; display: flex; flex-direction: column; }
.browser { flex-grow: 486; }
.dockhead { height: 21px; flex: none; display: flex; align-items: center; gap: 2px; padding: 0 2px 0 4px; }
.dockhead h2 { flex: 1; font-size: 14px; }
.dockhead button svg { width: 12px; height: 12px; }
.minibar { height: 30px; flex: none; display: flex; align-items: center; padding-left: 4px; }
.minibar button { width: 25px; height: 23px; }
.minibar svg { width: 16px; height: 16px; }
.minibar .dd { width: 15px; }
.minibar .dd svg { width: 10px; height: 6px; }
.minibar .on { width: 24px; border: 1px solid #b8b8b8; border-radius: 3px; background: #e0e0e0; }
.tree { flex: 1; min-height: 0; background: #fff; border: 1px solid #b8b8b8; }
.tree li { display: flex; align-items: center; }
.layers li { height: 20px; padding-left: 28px; font-size: 12px; font-weight: 700; }
.layers .current { background: #efefef; }
.layers input { width: 17px; height: 17px; }
.swatch { width: 16px; height: 16px; margin: 0 6px; border: 1px solid #777; }
.swatch.pink { width: 18px; height: 18px; border-color: #6d3548; }
.olive { background: #c5c398; }
.pink { background: #e15989; }
.hgrip.split { margin: 1px auto 2px; height: 3px; }
.sources li { height: 22px; padding-left: 10px; gap: 6px; }
.sources svg { width: 20px; height: 20px; }
.sources .ar { width: 5px; height: 10px; margin-right: 7px; }
.vgrip { width: 3px; height: 17px; margin: auto 2px; }
.map { flex: 1; min-width: 0; min-height: 0; display: flex; background: #fff; border: 1px solid #b8b8b8; }
.map svg { flex: 1; width: 100%; height: 100%; }
.land { fill: #e39754; }
.district, .border { fill: none; }
.district path, .border path { vector-effect: non-scaling-stroke; stroke-linejoin: round; }
.district { stroke: #a58733; }
.border { stroke: #35362a; }
.border .pier { stroke-width: 2px; }
.border .mole { stroke-width: 4px; }
.border .deck { stroke: #e39754; stroke-width: 1px; }
.watermark { font: 700 66px "Open Sans", sans-serif; fill: none; stroke: #000; stroke-opacity: .18; }
.labels, .credit { font: 16px "DejaVu Sans Condensed", "DejaVu Sans", sans-serif; font-stretch: condensed; }
.labels { text-anchor: middle; }
.credit { font-size: 23px; fill: #d7191c; text-anchor: end; }

/* style dock */
.east { margin: auto 3px auto 4px; }
.style { width: 459px; flex: none; padding-right: 3px; display: flex; flex-direction: column; }
.style .dockhead { height: 23px; padding: 0 0 2px 1px; }
.layerpick { flex: none; }
.stylebody { flex: 1; min-height: 0; display: flex; gap: 3px; padding: 7px 0 3px; }
.strip { width: 38px; flex: none; background: #5c5c5c; }
.strip button { width: 38px; height: 32px; padding-right: 6px; }
.strip .sel { background: #f0f0f0; padding: 0; }
.strip svg { width: 22px; height: 22px; }
.form { flex: 1; min-width: 0; display: flex; flex-direction: column; }
.line { display: flex; align-items: center; gap: 6px; }
.grow { flex: 1; min-width: 0; }
.second { margin-top: 6px; }
.line .place { width: 37px; height: 25px; }
.place svg { width: 22px; height: 22px; }
.line .eps { width: 28px; height: 28px; font-size: 24px; color: #6b3a76; }
.tabs { display: flex; align-items: flex-end; height: 35px; margin-top: 5px; border-bottom: 1px solid #b8b8b8; }
.tabs button { width: 54px; height: 32px; border: 1px solid #b8b8b8; border-left-width: 0; border-bottom: 0; background: #e9e9e9; }
.tabs .cur { height: 34px; border-left-width: 1px; background: linear-gradient(#fff, #f0f0f0); }
.tabs b { color: #444; font-size: 12px; }
.tabs svg { width: 20px; height: 20px; }
.tabs .mv { fill: #7f9db3; stroke: #56758c; }
.fmt { font: 700 10px/9px "DejaVu Sans Mono", monospace; color: #444; text-align: left; }
.fmt i { color: #888; font-style: normal; font-weight: 400; }
.pane { flex: 1; padding: 17px 6px 0; }
.pane h3 { font-size: 13px; }
.row { height: 34px; padding-right: 3px; display: grid; grid-template-columns: 111px 1fr 26px; align-items: center; }
h3 + .row { margin-top: 3px; }
.spaced { margin-top: 6px; }
.ctl { margin-right: 9px; min-width: 0; }
.ddo svg { width: 26px; height: 20px; }
.bius, .color, .opac, .sub { display: flex; align-items: center; }
.bius { justify-content: space-between; }
.far { margin-left: 28px; }
.sub { gap: 6px; }
.sub .spin { flex: 1; }
.swbtn { flex: 1; height: 26px; padding: 2px 4px; border: 1px solid #aaa; border-radius: 3px; background: #fff; }
.swbtn i { flex: 1; height: 20px; border-radius: 2px; background: #000; }
.swdd { width: 15px; height: 26px; border: 1px solid #aaa; border-radius: 3px; background: linear-gradient(#fff, #ececec); }
.swdd svg { width: 10px; height: 5px; }
.opac { gap: 4px; }
.opac .spin { width: 100px; flex: none; }
input[type=range] { appearance: none; flex: 1; min-width: 0; height: 24px; background: none; }
input[type=range]::-webkit-slider-runnable-track { height: 6px; border: 1px solid #2a76bd; background: #5aaaf5; border-radius: 1px; }
input[type=range]::-webkit-slider-thumb { appearance: none; width: 16px; height: 16px; margin-top: -6px; border: 1px solid #aaa; border-radius: 3px; background: #fff; }
.subst { display: flex; align-items: center; gap: 6px; height: 32px; }
.subst label { flex: 1; }
.foot { display: flex; align-items: center; gap: 6px; height: 27px; }
.hist { width: 28px; height: 27px; }
.hist svg { width: 16px; height: 16px; }
.orange { fill: #e07b3a; }
.green { fill: #6fb583; }
.foot input { margin-left: auto; }
.apply { width: 80px; height: 27px; margin-left: 7px; }

/* status bar */
.status { height: 30px; flex: none; display: flex; align-items: center; gap: 4px; padding: 1px 4px 0; }
.locator { width: 309px; height: 26px; display: flex; align-items: center; gap: 8px; padding-left: 8px; border: 1px solid #aaa; border-radius: 3px; background: #fff; }
.locator svg { width: 13px; height: 13px; }
.locator input { flex: 1; border: 0; padding: 0; background: none; }
.locator input::placeholder { color: #808080; }
.msg { flex: 1; padding-left: 4px; }
.coord { width: 112px; height: 25px; padding: 0 2px; border: 1px solid #aaa; border-radius: 3px; }
.status > svg { width: 20px; height: 20px; }
.status .mouse { margin: 0 6px 0 2px; }
.status .lock { width: 18px; margin: 0 2px 0 7px; }
.scale { width: 92px; height: 25px; padding: 0; }
.mag { width: 92px; }
.rotl { margin: 0 4px 0 6px; }
.rot { width: 88px; }
.status input[type=checkbox] { margin-left: 3px; }
.vis { margin: 0 14px 0 2px; }
.epsg { display: flex; align-items: center; gap: 4px; color: #000; text-decoration: none; }
.epsg svg { width: 20px; height: 20px; }
.bub { margin: 0 2px 0 14px; }
.bub svg { width: 20px; height: 20px; }
```
